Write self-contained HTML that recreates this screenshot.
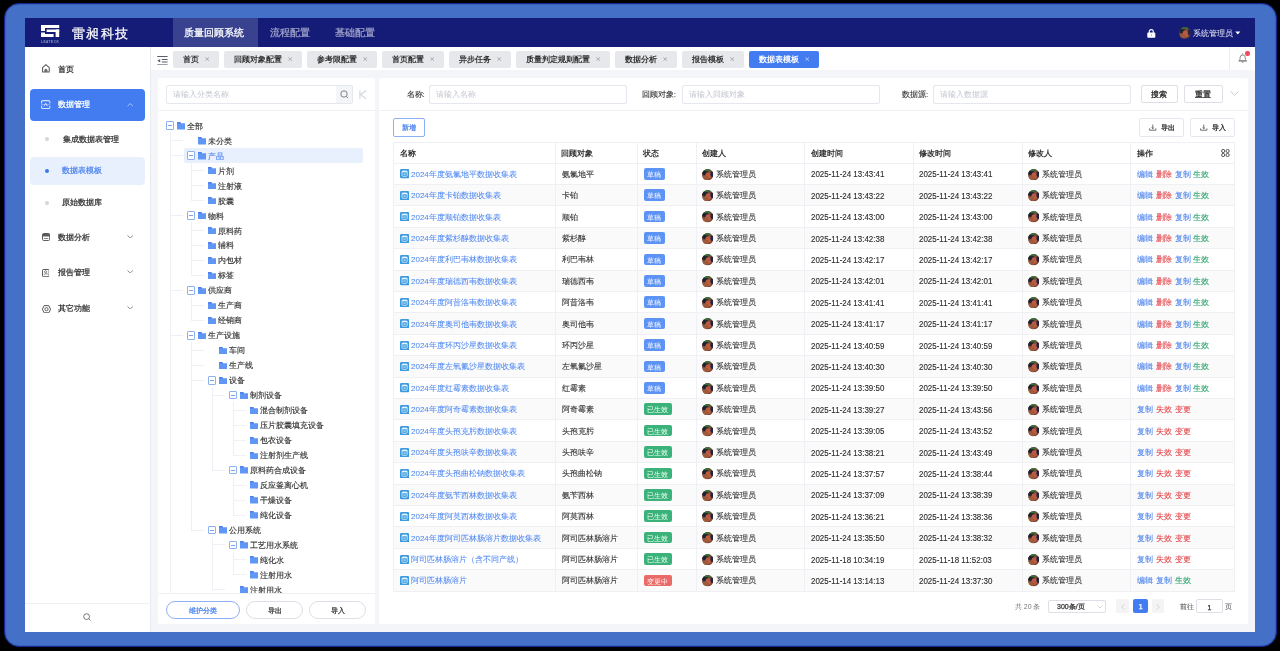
<!DOCTYPE html><html><head><meta charset="utf-8"><style>
*{box-sizing:border-box;margin:0;padding:0}
html,body{width:1280px;height:651px;overflow:hidden;background:#000;font-family:"Liberation Sans", sans-serif;}
.abs{position:absolute}
.t{position:absolute;white-space:nowrap;line-height:1;-webkit-text-stroke-width:0.25px}
.b{-webkit-text-stroke-width:0}
#frame{position:absolute;left:4px;top:3px;width:1272.5px;height:643.5px;border-radius:15px;background:#4570c8;border:1px solid #1a2596;box-shadow:inset 0 0 0 1px #3461b8;}
#app{position:absolute;left:25px;top:18px;width:1230px;height:614px;background:#f4f5f9;overflow:hidden}
</style></head><body>
<div id="root" style="position:absolute;left:0;top:0;width:1280px;height:651px;filter:blur(0.3px)">
<div id="frame"></div>
<div id="app"></div>
<div class="abs" style="left:25px;top:18px;width:1230px;height:29px;background:#151c78"></div>
<svg class="abs" style="left:41px;top:25px;" width="19" height="18" viewBox="0 0 19 18"><g fill="#fff"><rect x="0" y="0" width="18.2" height="3"/><rect x="0" y="0" width="4" height="6"/><rect x="5.6" y="4.5" width="12.6" height="2.5"/><rect x="14.6" y="4.5" width="3.6" height="7.5"/><rect x="0" y="7.5" width="4" height="4.5"/><rect x="0" y="9" width="12.6" height="3"/></g><text x="9.1" y="17.5" font-size="3.2" fill="#9a9fcc" text-anchor="middle" font-family="Liberation Sans" font-weight="bold" letter-spacing="0.5">LEATECK</text></svg>
<div class="t" style="left:71.5px;top:26.70px;font-size:13px;height:13px;line-height:13px;color:#fff;font-weight:400;letter-spacing:1.6px">雷昶科技</div>
<div class="abs" style="left:172.6px;top:18px;width:85.4px;height:29px;background:#38428f"></div>
<div class="t" style="left:184.4px;top:28.05px;font-size:10.3px;height:10.3px;line-height:10.3px;color:#fff;font-weight:500;">质量回顾系统</div>
<div class="t" style="left:270px;top:28.05px;font-size:10.3px;height:10.3px;line-height:10.3px;color:#9fa3c9;font-weight:400;">流程配置</div>
<div class="t" style="left:334.7px;top:28.05px;font-size:10.3px;height:10.3px;line-height:10.3px;color:#9fa3c9;font-weight:400;">基础配置</div>
<svg class="abs" style="left:1147.3px;top:28.6px;" width="8.6" height="9" viewBox="0 0 8.6 9"><path d="M2.3 4.2 V2.6 A2 2 0 0 1 6.3 2.6 V4.2" fill="none" stroke="#fff" stroke-width="1.1"/><rect x="0.3" y="3.6" width="8" height="5.2" rx="0.8" fill="#fff"/><rect x="3.9" y="5.4" width="0.8" height="1.6" fill="#8a8fc0"/></svg>
<svg class="abs" style="left:1179px;top:27.4px;" width="11.8" height="11.8" viewBox="0 0 11.8 11.8"><defs><clipPath id="av12"><circle cx="5.9" cy="5.9" r="5.9"/></clipPath></defs><g clip-path="url(#av12)"><rect width="11.8" height="11.8" fill="#7e4632"/><ellipse cx="2.95" cy="3.54" rx="3.54" ry="2.596" fill="#1c2230"/><ellipse cx="5.3100000000000005" cy="0.9440000000000001" rx="4.13" ry="1.416" fill="#3a6a3a"/><ellipse cx="6.490000000000001" cy="6.844" rx="2.95" ry="3.54" fill="#b95a42"/><ellipse cx="10.384" cy="5.3100000000000005" rx="1.6520000000000004" ry="2.95" fill="#1e2440"/><ellipse cx="3.54" cy="9.440000000000001" rx="2.95" ry="2.3600000000000003" fill="#9a5a3c"/></g></svg>
<div class="t" style="left:1193.4px;top:29.60px;font-size:8px;height:8px;line-height:8px;color:#dfe2f2;font-weight:400;-webkit-text-stroke-width:0.05px">系统管理员</div>
<svg class="abs" style="left:1235px;top:31px;" width="6" height="4" viewBox="0 0 6 4"><path d="M0.3 0.5 L5.3 0.5 L2.8 3.5Z" fill="#fff"/></svg>
<div class="abs" style="left:25px;top:47px;width:126px;height:585px;background:#fff;border-right:1px solid #e9ebf0"></div>
<svg class="abs" style="left:42px;top:64.4px;" width="8" height="8.6" viewBox="0 0 8 8.6"><path d="M0.55 3.6 L3.9 0.6 L7.25 3.6 V8.0 H0.55 Z" fill="none" stroke="#5a5a5a" stroke-width="1.05" stroke-linejoin="round"/><path d="M2.4 8.0 V6.3 A1.5 1.5 0 0 1 5.4 6.3 V8.0Z" fill="#6a6a6a"/></svg>
<div class="t" style="left:57.7px;top:65.60px;font-size:8px;height:8px;line-height:8px;color:#333;font-weight:400;">首页</div>
<div class="abs" style="left:30px;top:89px;width:115px;height:32px;background:#437bf0;border-radius:4px"></div>
<svg class="abs" style="left:41.2px;top:99.9px;" width="9.4" height="9.2" viewBox="0 0 9.4 9.2"><g fill="none" stroke="#d6e4ff" stroke-width="1.1"><path d="M0.6 3.4 V2 Q0.6 0.6 2 0.6 H7.4 Q8.8 0.6 8.8 2 V3.4"/><path d="M0.6 5.8 V7.2 Q0.6 8.6 2 8.6 H7.4 Q8.8 8.6 8.8 7.2 V5.8"/></g><path d="M0 4.6 H9.4" stroke="#b9cffa" stroke-width="0.6"/><path d="M3 6.2 L4.7 3.2 L6.4 6.2" fill="none" stroke="#d6e4ff" stroke-width="0.9"/></svg>
<div class="t" style="left:57.6px;top:101.10px;font-size:8px;height:8px;line-height:8px;color:#fff;font-weight:400;">数据管理</div>
<svg class="abs" style="left:127px;top:103.2px;" width="6.4" height="3.6" viewBox="0 0 6.4 3.6"><path d="M0.5 3.1 L3.2 0.6 L5.9 3.1" fill="none" stroke="#a9c4f8" stroke-width="1"/></svg>
<div class="abs" style="left:45px;top:137px;width:4px;height:4px;background:#d4d6de;border-radius:50%"></div>
<div class="t" style="left:62.6px;top:135.60px;font-size:8px;height:8px;line-height:8px;color:#333;font-weight:400;">集成数据表管理</div>
<div class="abs" style="left:30px;top:157px;width:115px;height:28.4px;background:#e9f0fd;border-radius:4px"></div>
<div class="abs" style="left:44.8px;top:168.7px;width:4px;height:4px;background:#3b78e7;border-radius:50%"></div>
<div class="t" style="left:62px;top:167.30px;font-size:8px;height:8px;line-height:8px;color:#4f86ee;font-weight:400;">数据表模板</div>
<div class="abs" style="left:45px;top:200.5px;width:4px;height:4px;background:#d4d6de;border-radius:50%"></div>
<div class="t" style="left:62px;top:199.10px;font-size:8px;height:8px;line-height:8px;color:#333;font-weight:400;">原始数据库</div>
<svg class="abs" style="left:41.9px;top:232.9px;" width="8.2" height="8" viewBox="0 0 8.2 8"><rect x="0.5" y="0.5" width="7.2" height="7" rx="1.3" fill="none" stroke="#5a5a5a" stroke-width="1"/><rect x="0.5" y="0.5" width="7.2" height="3" rx="1" fill="#5a5a5a"/><rect x="2" y="5.1" width="4.2" height="0.9" fill="#777"/></svg>
<div class="t" style="left:57.9px;top:233.60px;font-size:8px;height:8px;line-height:8px;color:#333;font-weight:400;">数据分析</div>
<svg class="abs" style="left:127.2px;top:234.9px;" width="6.4" height="3.6" viewBox="0 0 6.4 3.6"><path d="M0.5 0.5 L3.2 3 L5.9 0.5" fill="none" stroke="#8a8a8a" stroke-width="1"/></svg>
<svg class="abs" style="left:41.9px;top:268.8px;" width="7.6" height="8.2" viewBox="0 0 7.6 8.2"><rect x="0.5" y="0.5" width="6.6" height="7.2" rx="0.8" fill="none" stroke="#5a5a5a" stroke-width="1"/><circle cx="3.6" cy="2.8" r="1.1" fill="none" stroke="#666" stroke-width="0.8"/><path d="M1.8 5.6 L3.4 4.9 H5.8" fill="none" stroke="#666" stroke-width="0.8"/></svg>
<div class="t" style="left:57.9px;top:268.60px;font-size:8px;height:8px;line-height:8px;color:#333;font-weight:400;">报告管理</div>
<svg class="abs" style="left:127.2px;top:269.9px;" width="6.4" height="3.6" viewBox="0 0 6.4 3.6"><path d="M0.5 0.5 L3.2 3 L5.9 0.5" fill="none" stroke="#8a8a8a" stroke-width="1"/></svg>
<svg class="abs" style="left:41.5px;top:304.5px;" width="9" height="8.4" viewBox="0 0 9 8.4"><path d="M2.2 0.6 H6.8 L8.6 4.2 L6.8 7.8 H2.2 L0.4 4.2Z" fill="none" stroke="#555" stroke-width="1"/><circle cx="4.5" cy="4.2" r="1.6" fill="none" stroke="#555" stroke-width="0.9"/></svg>
<div class="t" style="left:57.9px;top:304.60px;font-size:8px;height:8px;line-height:8px;color:#333;font-weight:400;">其它功能</div>
<svg class="abs" style="left:127.2px;top:305.9px;" width="6.4" height="3.6" viewBox="0 0 6.4 3.6"><path d="M0.5 0.5 L3.2 3 L5.9 0.5" fill="none" stroke="#8a8a8a" stroke-width="1"/></svg>
<div class="abs" style="left:25px;top:603.2px;width:126px;height:1px;background:#f0f1f4"></div>
<svg class="abs" style="left:83px;top:613px;" width="8" height="8" viewBox="0 0 8 8"><circle cx="3.6" cy="3.6" r="2.9" fill="none" stroke="#666" stroke-width="0.9"/><path d="M5.8 5.8 L7.4 7.4" stroke="#666" stroke-width="0.9"/></svg>
<div class="abs" style="left:151px;top:47px;width:1104px;height:23px;background:#fff"></div>
<svg class="abs" style="left:157px;top:55.8px;" width="11" height="9.5" viewBox="0 0 11 9.5"><g fill="#5a5e70"><rect x="0.2" y="0" width="10.4" height="1"/><rect x="4.8" y="3" width="5.8" height="1"/><rect x="4.8" y="5.5" width="5.8" height="1"/><rect x="0.2" y="8.4" width="10.4" height="1"/><path d="M0.3 4.7 L3.2 2.9 V6.5Z"/></g></svg>
<div class="abs" style="left:173.0px;top:50.6px;width:46px;height:17px;background:#e7e8eb;border-radius:2px"></div>
<div class="t b" style="left:182.5px;top:55.60px;font-size:8px;height:8px;line-height:8px;color:#333;font-weight:600;">首页</div>
<svg class="abs" style="left:205.0px;top:56.9px;" width="4.4" height="4.2" viewBox="0 0 4.4 4.2"><path d="M0.4 0.4 L4 3.8 M4 0.4 L0.4 3.8" stroke="#9a9a9a" stroke-width="0.75"/></svg>
<div class="abs" style="left:224.0px;top:50.6px;width:78px;height:17px;background:#e7e8eb;border-radius:2px"></div>
<div class="t b" style="left:233.5px;top:55.60px;font-size:8px;height:8px;line-height:8px;color:#333;font-weight:600;">回顾对象配置</div>
<svg class="abs" style="left:288.0px;top:56.9px;" width="4.4" height="4.2" viewBox="0 0 4.4 4.2"><path d="M0.4 0.4 L4 3.8 M4 0.4 L0.4 3.8" stroke="#9a9a9a" stroke-width="0.75"/></svg>
<div class="abs" style="left:307.0px;top:50.6px;width:70px;height:17px;background:#e7e8eb;border-radius:2px"></div>
<div class="t b" style="left:316.5px;top:55.60px;font-size:8px;height:8px;line-height:8px;color:#333;font-weight:600;">参考限配置</div>
<svg class="abs" style="left:363.0px;top:56.9px;" width="4.4" height="4.2" viewBox="0 0 4.4 4.2"><path d="M0.4 0.4 L4 3.8 M4 0.4 L0.4 3.8" stroke="#9a9a9a" stroke-width="0.75"/></svg>
<div class="abs" style="left:382.0px;top:50.6px;width:62px;height:17px;background:#e7e8eb;border-radius:2px"></div>
<div class="t b" style="left:391.5px;top:55.60px;font-size:8px;height:8px;line-height:8px;color:#333;font-weight:600;">首页配置</div>
<svg class="abs" style="left:430.0px;top:56.9px;" width="4.4" height="4.2" viewBox="0 0 4.4 4.2"><path d="M0.4 0.4 L4 3.8 M4 0.4 L0.4 3.8" stroke="#9a9a9a" stroke-width="0.75"/></svg>
<div class="abs" style="left:449.0px;top:50.6px;width:62px;height:17px;background:#e7e8eb;border-radius:2px"></div>
<div class="t b" style="left:458.5px;top:55.60px;font-size:8px;height:8px;line-height:8px;color:#333;font-weight:600;">异步任务</div>
<svg class="abs" style="left:497.0px;top:56.9px;" width="4.4" height="4.2" viewBox="0 0 4.4 4.2"><path d="M0.4 0.4 L4 3.8 M4 0.4 L0.4 3.8" stroke="#9a9a9a" stroke-width="0.75"/></svg>
<div class="abs" style="left:516.0px;top:50.6px;width:94px;height:17px;background:#e7e8eb;border-radius:2px"></div>
<div class="t b" style="left:525.5px;top:55.60px;font-size:8px;height:8px;line-height:8px;color:#333;font-weight:600;">质量判定规则配置</div>
<svg class="abs" style="left:596.0px;top:56.9px;" width="4.4" height="4.2" viewBox="0 0 4.4 4.2"><path d="M0.4 0.4 L4 3.8 M4 0.4 L0.4 3.8" stroke="#9a9a9a" stroke-width="0.75"/></svg>
<div class="abs" style="left:615.0px;top:50.6px;width:62px;height:17px;background:#e7e8eb;border-radius:2px"></div>
<div class="t b" style="left:624.5px;top:55.60px;font-size:8px;height:8px;line-height:8px;color:#333;font-weight:600;">数据分析</div>
<svg class="abs" style="left:663.0px;top:56.9px;" width="4.4" height="4.2" viewBox="0 0 4.4 4.2"><path d="M0.4 0.4 L4 3.8 M4 0.4 L0.4 3.8" stroke="#9a9a9a" stroke-width="0.75"/></svg>
<div class="abs" style="left:682.0px;top:50.6px;width:62px;height:17px;background:#e7e8eb;border-radius:2px"></div>
<div class="t b" style="left:691.5px;top:55.60px;font-size:8px;height:8px;line-height:8px;color:#333;font-weight:600;">报告模板</div>
<svg class="abs" style="left:730.0px;top:56.9px;" width="4.4" height="4.2" viewBox="0 0 4.4 4.2"><path d="M0.4 0.4 L4 3.8 M4 0.4 L0.4 3.8" stroke="#9a9a9a" stroke-width="0.75"/></svg>
<div class="abs" style="left:749.0px;top:50.6px;width:70px;height:17px;background:#437bf0;border-radius:2px"></div>
<div class="t b" style="left:758.5px;top:55.60px;font-size:8px;height:8px;line-height:8px;color:#fff;font-weight:600;">数据表模板</div>
<svg class="abs" style="left:805.0px;top:56.9px;" width="4.4" height="4.2" viewBox="0 0 4.4 4.2"><path d="M0.4 0.4 L4 3.8 M4 0.4 L0.4 3.8" stroke="#c9d9fa" stroke-width="0.75"/></svg>
<div class="abs" style="left:1229.3px;top:47px;width:1px;height:23px;background:#eceef2"></div>
<svg class="abs" style="left:1238px;top:53px;" width="9.4" height="10" viewBox="0 0 9.4 10"><path d="M1.3 7.8 C2 7 2.1 6 2.1 4.6 A2.6 2.6 0 0 1 7.3 4.6 C7.3 6 7.4 7 8.1 7.8 Z" fill="none" stroke="#666" stroke-width="0.75"/><path d="M0.4 8 H9" stroke="#666" stroke-width="0.75"/><path d="M4.7 0.4 V1.8" stroke="#666" stroke-width="0.7"/><path d="M3.9 9.2 H5.5" stroke="#666" stroke-width="0.8"/></svg>
<div class="abs" style="left:1245.4px;top:51.1px;width:4.5px;height:4.5px;background:#f5475a;border-radius:50%"></div>
<div class="abs" style="left:157.6px;top:78.4px;width:217.8px;height:545.2px;background:#fff;border-radius:2px"></div>
<div class="abs" style="left:166.2px;top:85.3px;width:186.5px;height:18.7px;background:#fff;border:1px solid #e4e7ed;border-radius:2px"></div>
<div class="abs" style="left:335.8px;top:86.3px;width:15.9px;height:16.7px;background:#f3f5f8"></div>
<svg class="abs" style="left:339.5px;top:89.8px;" width="9" height="9" viewBox="0 0 9 9"><circle cx="4" cy="4" r="3.2" fill="none" stroke="#666" stroke-width="0.8"/><path d="M6.3 6.3 L8 8" stroke="#666" stroke-width="0.8"/></svg>
<div class="t" style="left:173px;top:91.00px;font-size:8px;height:8px;line-height:8px;color:#c0c4cc;font-weight:400;-webkit-text-stroke-width:0">请输入分类名称</div>
<svg class="abs" style="left:359px;top:90.2px;" width="8" height="9.2" viewBox="0 0 8 9.2"><path d="M0.9 0.4 V8.8" stroke="#d0d3da" stroke-width="1.1"/><path d="M7.2 0.5 L1.6 4.6 L7.2 8.7" fill="none" stroke="#d0d3da" stroke-width="1.1"/></svg>
<div class="abs" style="left:157.6px;top:110.3px;width:217.8px;height:1px;background:#eff1f6"></div>
<div class="abs" style="left:157.6px;top:111.3px;width:217.8px;height:481.9px;overflow:hidden">
<div class="abs" style="left:26.40px;top:36.60px;width:178.8px;height:15.1px;background:#e9f0fd;border-radius:2px"></div>
<div class="abs" style="left:12.70px;top:28.73px;width:13.0px;height:1px;background:#eef0f6"></div>
<div class="abs" style="left:12.70px;top:43.71px;width:13.0px;height:1px;background:#eef0f6"></div>
<div class="abs" style="left:33.70px;top:58.69px;width:12.5px;height:1px;background:#eef0f6"></div>
<div class="abs" style="left:33.70px;top:73.67px;width:12.5px;height:1px;background:#eef0f6"></div>
<div class="abs" style="left:33.70px;top:88.65px;width:12.5px;height:1px;background:#eef0f6"></div>
<div class="abs" style="left:12.70px;top:103.63px;width:13.0px;height:1px;background:#eef0f6"></div>
<div class="abs" style="left:33.70px;top:118.61px;width:12.5px;height:1px;background:#eef0f6"></div>
<div class="abs" style="left:33.70px;top:133.59px;width:12.5px;height:1px;background:#eef0f6"></div>
<div class="abs" style="left:33.70px;top:148.57px;width:12.5px;height:1px;background:#eef0f6"></div>
<div class="abs" style="left:33.70px;top:163.55px;width:12.5px;height:1px;background:#eef0f6"></div>
<div class="abs" style="left:12.70px;top:178.53px;width:13.0px;height:1px;background:#eef0f6"></div>
<div class="abs" style="left:33.70px;top:193.51px;width:12.5px;height:1px;background:#eef0f6"></div>
<div class="abs" style="left:33.70px;top:208.49px;width:12.5px;height:1px;background:#eef0f6"></div>
<div class="abs" style="left:12.70px;top:223.47px;width:13.0px;height:1px;background:#eef0f6"></div>
<div class="abs" style="left:33.70px;top:238.45px;width:13.0px;height:1px;background:#eef0f6"></div>
<div class="abs" style="left:33.70px;top:253.43px;width:13.0px;height:1px;background:#eef0f6"></div>
<div class="abs" style="left:33.70px;top:268.41px;width:13.0px;height:1px;background:#eef0f6"></div>
<div class="abs" style="left:54.70px;top:283.39px;width:13.0px;height:1px;background:#eef0f6"></div>
<div class="abs" style="left:75.70px;top:298.37px;width:12.5px;height:1px;background:#eef0f6"></div>
<div class="abs" style="left:75.70px;top:313.35px;width:12.5px;height:1px;background:#eef0f6"></div>
<div class="abs" style="left:75.70px;top:328.33px;width:12.5px;height:1px;background:#eef0f6"></div>
<div class="abs" style="left:75.70px;top:343.31px;width:12.5px;height:1px;background:#eef0f6"></div>
<div class="abs" style="left:54.70px;top:358.29px;width:13.0px;height:1px;background:#eef0f6"></div>
<div class="abs" style="left:75.70px;top:373.27px;width:12.5px;height:1px;background:#eef0f6"></div>
<div class="abs" style="left:75.70px;top:388.25px;width:12.5px;height:1px;background:#eef0f6"></div>
<div class="abs" style="left:75.70px;top:403.23px;width:12.5px;height:1px;background:#eef0f6"></div>
<div class="abs" style="left:33.70px;top:418.21px;width:13.0px;height:1px;background:#eef0f6"></div>
<div class="abs" style="left:54.70px;top:433.19px;width:13.0px;height:1px;background:#eef0f6"></div>
<div class="abs" style="left:75.70px;top:448.17px;width:12.5px;height:1px;background:#eef0f6"></div>
<div class="abs" style="left:75.70px;top:463.15px;width:12.5px;height:1px;background:#eef0f6"></div>
<div class="abs" style="left:54.70px;top:478.13px;width:13.0px;height:1px;background:#eef0f6"></div>
<div class="abs" style="left:12.70px;top:20.95px;width:1px;height:567.75px;background:#eef0f6"></div>
<div class="abs" style="left:33.70px;top:50.91px;width:1px;height:38.24000000000001px;background:#eef0f6"></div>
<div class="abs" style="left:33.70px;top:110.83px;width:1px;height:53.22000000000003px;background:#eef0f6"></div>
<div class="abs" style="left:33.70px;top:185.73px;width:1px;height:23.260000000000048px;background:#eef0f6"></div>
<div class="abs" style="left:33.70px;top:230.67px;width:1px;height:188.03999999999996px;background:#eef0f6"></div>
<div class="abs" style="left:54.70px;top:275.61px;width:1px;height:83.18000000000006px;background:#eef0f6"></div>
<div class="abs" style="left:75.70px;top:290.59px;width:1px;height:53.22000000000003px;background:#eef0f6"></div>
<div class="abs" style="left:75.70px;top:365.49px;width:1px;height:38.23999999999995px;background:#eef0f6"></div>
<div class="abs" style="left:54.70px;top:425.41px;width:1px;height:53.219999999999914px;background:#eef0f6"></div>
<div class="abs" style="left:75.70px;top:440.39px;width:1px;height:23.25999999999999px;background:#eef0f6"></div>
<div class="abs" style="left:8.20px;top:9.95px;width:8.5px;height:8.6px;background:#fff;border:1px solid #8cb0f4;border-radius:1px"></div>
<div class="abs" style="left:10.40px;top:13.85px;width:4.2px;height:0.8px;background:#7aa3f2"></div>
<svg class="abs" style="left:19.30px;top:10.65px" width="8.4" height="7.6" viewBox="0 0 8.4 7.6"><path d="M0 0.6 Q0 0 0.6 0 H3.2 L4 1.2 H7.8 Q8.4 1.2 8.4 1.8 V7 Q8.4 7.6 7.8 7.6 H0.6 Q0 7.6 0 7Z" fill="#6096f6"/><path d="M0 0.6 Q0 0 0.6 0 H3.2 L4 1.6 H0Z" fill="#4a7fee"/></svg>
<div class="t" style="left:29.30px;top:11.35px;font-size:8px;height:8px;line-height:8px;color:#333;-webkit-text-stroke-width:0.15px">全部</div>
<svg class="abs" style="left:40.30px;top:25.63px" width="8.4" height="7.6" viewBox="0 0 8.4 7.6"><path d="M0 0.6 Q0 0 0.6 0 H3.2 L4 1.2 H7.8 Q8.4 1.2 8.4 1.8 V7 Q8.4 7.6 7.8 7.6 H0.6 Q0 7.6 0 7Z" fill="#6096f6"/><path d="M0 0.6 Q0 0 0.6 0 H3.2 L4 1.6 H0Z" fill="#4a7fee"/></svg>
<div class="t" style="left:50.30px;top:26.33px;font-size:8px;height:8px;line-height:8px;color:#333;-webkit-text-stroke-width:0.15px">未分类</div>
<div class="abs" style="left:29.20px;top:39.91px;width:8.5px;height:8.6px;background:#fff;border:1px solid #8cb0f4;border-radius:1px"></div>
<div class="abs" style="left:31.40px;top:43.81px;width:4.2px;height:0.8px;background:#7aa3f2"></div>
<svg class="abs" style="left:40.30px;top:40.61px" width="8.4" height="7.6" viewBox="0 0 8.4 7.6"><path d="M0 0.6 Q0 0 0.6 0 H3.2 L4 1.2 H7.8 Q8.4 1.2 8.4 1.8 V7 Q8.4 7.6 7.8 7.6 H0.6 Q0 7.6 0 7Z" fill="#6096f6"/><path d="M0 0.6 Q0 0 0.6 0 H3.2 L4 1.6 H0Z" fill="#4a7fee"/></svg>
<div class="t" style="left:50.30px;top:41.31px;font-size:8px;height:8px;line-height:8px;color:#4f86ee;-webkit-text-stroke-width:0.15px">产品</div>
<svg class="abs" style="left:50.20px;top:55.59px" width="8.4" height="7.6" viewBox="0 0 8.4 7.6"><path d="M0 0.6 Q0 0 0.6 0 H3.2 L4 1.2 H7.8 Q8.4 1.2 8.4 1.8 V7 Q8.4 7.6 7.8 7.6 H0.6 Q0 7.6 0 7Z" fill="#6096f6"/><path d="M0 0.6 Q0 0 0.6 0 H3.2 L4 1.6 H0Z" fill="#4a7fee"/></svg>
<div class="t" style="left:60.20px;top:56.29px;font-size:8px;height:8px;line-height:8px;color:#333;-webkit-text-stroke-width:0.15px">片剂</div>
<svg class="abs" style="left:50.20px;top:70.57px" width="8.4" height="7.6" viewBox="0 0 8.4 7.6"><path d="M0 0.6 Q0 0 0.6 0 H3.2 L4 1.2 H7.8 Q8.4 1.2 8.4 1.8 V7 Q8.4 7.6 7.8 7.6 H0.6 Q0 7.6 0 7Z" fill="#6096f6"/><path d="M0 0.6 Q0 0 0.6 0 H3.2 L4 1.6 H0Z" fill="#4a7fee"/></svg>
<div class="t" style="left:60.20px;top:71.27px;font-size:8px;height:8px;line-height:8px;color:#333;-webkit-text-stroke-width:0.15px">注射液</div>
<svg class="abs" style="left:50.20px;top:85.55px" width="8.4" height="7.6" viewBox="0 0 8.4 7.6"><path d="M0 0.6 Q0 0 0.6 0 H3.2 L4 1.2 H7.8 Q8.4 1.2 8.4 1.8 V7 Q8.4 7.6 7.8 7.6 H0.6 Q0 7.6 0 7Z" fill="#6096f6"/><path d="M0 0.6 Q0 0 0.6 0 H3.2 L4 1.6 H0Z" fill="#4a7fee"/></svg>
<div class="t" style="left:60.20px;top:86.25px;font-size:8px;height:8px;line-height:8px;color:#333;-webkit-text-stroke-width:0.15px">胶囊</div>
<div class="abs" style="left:29.20px;top:99.83px;width:8.5px;height:8.6px;background:#fff;border:1px solid #8cb0f4;border-radius:1px"></div>
<div class="abs" style="left:31.40px;top:103.73px;width:4.2px;height:0.8px;background:#7aa3f2"></div>
<svg class="abs" style="left:40.30px;top:100.53px" width="8.4" height="7.6" viewBox="0 0 8.4 7.6"><path d="M0 0.6 Q0 0 0.6 0 H3.2 L4 1.2 H7.8 Q8.4 1.2 8.4 1.8 V7 Q8.4 7.6 7.8 7.6 H0.6 Q0 7.6 0 7Z" fill="#6096f6"/><path d="M0 0.6 Q0 0 0.6 0 H3.2 L4 1.6 H0Z" fill="#4a7fee"/></svg>
<div class="t" style="left:50.30px;top:101.23px;font-size:8px;height:8px;line-height:8px;color:#333;-webkit-text-stroke-width:0.15px">物料</div>
<svg class="abs" style="left:50.20px;top:115.51px" width="8.4" height="7.6" viewBox="0 0 8.4 7.6"><path d="M0 0.6 Q0 0 0.6 0 H3.2 L4 1.2 H7.8 Q8.4 1.2 8.4 1.8 V7 Q8.4 7.6 7.8 7.6 H0.6 Q0 7.6 0 7Z" fill="#6096f6"/><path d="M0 0.6 Q0 0 0.6 0 H3.2 L4 1.6 H0Z" fill="#4a7fee"/></svg>
<div class="t" style="left:60.20px;top:116.21px;font-size:8px;height:8px;line-height:8px;color:#333;-webkit-text-stroke-width:0.15px">原料药</div>
<svg class="abs" style="left:50.20px;top:130.49px" width="8.4" height="7.6" viewBox="0 0 8.4 7.6"><path d="M0 0.6 Q0 0 0.6 0 H3.2 L4 1.2 H7.8 Q8.4 1.2 8.4 1.8 V7 Q8.4 7.6 7.8 7.6 H0.6 Q0 7.6 0 7Z" fill="#6096f6"/><path d="M0 0.6 Q0 0 0.6 0 H3.2 L4 1.6 H0Z" fill="#4a7fee"/></svg>
<div class="t" style="left:60.20px;top:131.19px;font-size:8px;height:8px;line-height:8px;color:#333;-webkit-text-stroke-width:0.15px">辅料</div>
<svg class="abs" style="left:50.20px;top:145.47px" width="8.4" height="7.6" viewBox="0 0 8.4 7.6"><path d="M0 0.6 Q0 0 0.6 0 H3.2 L4 1.2 H7.8 Q8.4 1.2 8.4 1.8 V7 Q8.4 7.6 7.8 7.6 H0.6 Q0 7.6 0 7Z" fill="#6096f6"/><path d="M0 0.6 Q0 0 0.6 0 H3.2 L4 1.6 H0Z" fill="#4a7fee"/></svg>
<div class="t" style="left:60.20px;top:146.17px;font-size:8px;height:8px;line-height:8px;color:#333;-webkit-text-stroke-width:0.15px">内包材</div>
<svg class="abs" style="left:50.20px;top:160.45px" width="8.4" height="7.6" viewBox="0 0 8.4 7.6"><path d="M0 0.6 Q0 0 0.6 0 H3.2 L4 1.2 H7.8 Q8.4 1.2 8.4 1.8 V7 Q8.4 7.6 7.8 7.6 H0.6 Q0 7.6 0 7Z" fill="#6096f6"/><path d="M0 0.6 Q0 0 0.6 0 H3.2 L4 1.6 H0Z" fill="#4a7fee"/></svg>
<div class="t" style="left:60.20px;top:161.15px;font-size:8px;height:8px;line-height:8px;color:#333;-webkit-text-stroke-width:0.15px">标签</div>
<div class="abs" style="left:29.20px;top:174.73px;width:8.5px;height:8.6px;background:#fff;border:1px solid #8cb0f4;border-radius:1px"></div>
<div class="abs" style="left:31.40px;top:178.63px;width:4.2px;height:0.8px;background:#7aa3f2"></div>
<svg class="abs" style="left:40.30px;top:175.43px" width="8.4" height="7.6" viewBox="0 0 8.4 7.6"><path d="M0 0.6 Q0 0 0.6 0 H3.2 L4 1.2 H7.8 Q8.4 1.2 8.4 1.8 V7 Q8.4 7.6 7.8 7.6 H0.6 Q0 7.6 0 7Z" fill="#6096f6"/><path d="M0 0.6 Q0 0 0.6 0 H3.2 L4 1.6 H0Z" fill="#4a7fee"/></svg>
<div class="t" style="left:50.30px;top:176.13px;font-size:8px;height:8px;line-height:8px;color:#333;-webkit-text-stroke-width:0.15px">供应商</div>
<svg class="abs" style="left:50.20px;top:190.41px" width="8.4" height="7.6" viewBox="0 0 8.4 7.6"><path d="M0 0.6 Q0 0 0.6 0 H3.2 L4 1.2 H7.8 Q8.4 1.2 8.4 1.8 V7 Q8.4 7.6 7.8 7.6 H0.6 Q0 7.6 0 7Z" fill="#6096f6"/><path d="M0 0.6 Q0 0 0.6 0 H3.2 L4 1.6 H0Z" fill="#4a7fee"/></svg>
<div class="t" style="left:60.20px;top:191.11px;font-size:8px;height:8px;line-height:8px;color:#333;-webkit-text-stroke-width:0.15px">生产商</div>
<svg class="abs" style="left:50.20px;top:205.39px" width="8.4" height="7.6" viewBox="0 0 8.4 7.6"><path d="M0 0.6 Q0 0 0.6 0 H3.2 L4 1.2 H7.8 Q8.4 1.2 8.4 1.8 V7 Q8.4 7.6 7.8 7.6 H0.6 Q0 7.6 0 7Z" fill="#6096f6"/><path d="M0 0.6 Q0 0 0.6 0 H3.2 L4 1.6 H0Z" fill="#4a7fee"/></svg>
<div class="t" style="left:60.20px;top:206.09px;font-size:8px;height:8px;line-height:8px;color:#333;-webkit-text-stroke-width:0.15px">经销商</div>
<div class="abs" style="left:29.20px;top:219.67px;width:8.5px;height:8.6px;background:#fff;border:1px solid #8cb0f4;border-radius:1px"></div>
<div class="abs" style="left:31.40px;top:223.57px;width:4.2px;height:0.8px;background:#7aa3f2"></div>
<svg class="abs" style="left:40.30px;top:220.37px" width="8.4" height="7.6" viewBox="0 0 8.4 7.6"><path d="M0 0.6 Q0 0 0.6 0 H3.2 L4 1.2 H7.8 Q8.4 1.2 8.4 1.8 V7 Q8.4 7.6 7.8 7.6 H0.6 Q0 7.6 0 7Z" fill="#6096f6"/><path d="M0 0.6 Q0 0 0.6 0 H3.2 L4 1.6 H0Z" fill="#4a7fee"/></svg>
<div class="t" style="left:50.30px;top:221.07px;font-size:8px;height:8px;line-height:8px;color:#333;-webkit-text-stroke-width:0.15px">生产设施</div>
<svg class="abs" style="left:61.30px;top:235.35px" width="8.4" height="7.6" viewBox="0 0 8.4 7.6"><path d="M0 0.6 Q0 0 0.6 0 H3.2 L4 1.2 H7.8 Q8.4 1.2 8.4 1.8 V7 Q8.4 7.6 7.8 7.6 H0.6 Q0 7.6 0 7Z" fill="#6096f6"/><path d="M0 0.6 Q0 0 0.6 0 H3.2 L4 1.6 H0Z" fill="#4a7fee"/></svg>
<div class="t" style="left:71.30px;top:236.05px;font-size:8px;height:8px;line-height:8px;color:#333;-webkit-text-stroke-width:0.15px">车间</div>
<svg class="abs" style="left:61.30px;top:250.33px" width="8.4" height="7.6" viewBox="0 0 8.4 7.6"><path d="M0 0.6 Q0 0 0.6 0 H3.2 L4 1.2 H7.8 Q8.4 1.2 8.4 1.8 V7 Q8.4 7.6 7.8 7.6 H0.6 Q0 7.6 0 7Z" fill="#6096f6"/><path d="M0 0.6 Q0 0 0.6 0 H3.2 L4 1.6 H0Z" fill="#4a7fee"/></svg>
<div class="t" style="left:71.30px;top:251.03px;font-size:8px;height:8px;line-height:8px;color:#333;-webkit-text-stroke-width:0.15px">生产线</div>
<div class="abs" style="left:50.20px;top:264.61px;width:8.5px;height:8.6px;background:#fff;border:1px solid #8cb0f4;border-radius:1px"></div>
<div class="abs" style="left:52.40px;top:268.51px;width:4.2px;height:0.8px;background:#7aa3f2"></div>
<svg class="abs" style="left:61.30px;top:265.31px" width="8.4" height="7.6" viewBox="0 0 8.4 7.6"><path d="M0 0.6 Q0 0 0.6 0 H3.2 L4 1.2 H7.8 Q8.4 1.2 8.4 1.8 V7 Q8.4 7.6 7.8 7.6 H0.6 Q0 7.6 0 7Z" fill="#6096f6"/><path d="M0 0.6 Q0 0 0.6 0 H3.2 L4 1.6 H0Z" fill="#4a7fee"/></svg>
<div class="t" style="left:71.30px;top:266.01px;font-size:8px;height:8px;line-height:8px;color:#333;-webkit-text-stroke-width:0.15px">设备</div>
<div class="abs" style="left:71.20px;top:279.59px;width:8.5px;height:8.6px;background:#fff;border:1px solid #8cb0f4;border-radius:1px"></div>
<div class="abs" style="left:73.40px;top:283.49px;width:4.2px;height:0.8px;background:#7aa3f2"></div>
<svg class="abs" style="left:82.30px;top:280.29px" width="8.4" height="7.6" viewBox="0 0 8.4 7.6"><path d="M0 0.6 Q0 0 0.6 0 H3.2 L4 1.2 H7.8 Q8.4 1.2 8.4 1.8 V7 Q8.4 7.6 7.8 7.6 H0.6 Q0 7.6 0 7Z" fill="#6096f6"/><path d="M0 0.6 Q0 0 0.6 0 H3.2 L4 1.6 H0Z" fill="#4a7fee"/></svg>
<div class="t" style="left:92.30px;top:280.99px;font-size:8px;height:8px;line-height:8px;color:#333;-webkit-text-stroke-width:0.15px">制剂设备</div>
<svg class="abs" style="left:92.20px;top:295.27px" width="8.4" height="7.6" viewBox="0 0 8.4 7.6"><path d="M0 0.6 Q0 0 0.6 0 H3.2 L4 1.2 H7.8 Q8.4 1.2 8.4 1.8 V7 Q8.4 7.6 7.8 7.6 H0.6 Q0 7.6 0 7Z" fill="#6096f6"/><path d="M0 0.6 Q0 0 0.6 0 H3.2 L4 1.6 H0Z" fill="#4a7fee"/></svg>
<div class="t" style="left:102.20px;top:295.97px;font-size:8px;height:8px;line-height:8px;color:#333;-webkit-text-stroke-width:0.15px">混合制剂设备</div>
<svg class="abs" style="left:92.20px;top:310.25px" width="8.4" height="7.6" viewBox="0 0 8.4 7.6"><path d="M0 0.6 Q0 0 0.6 0 H3.2 L4 1.2 H7.8 Q8.4 1.2 8.4 1.8 V7 Q8.4 7.6 7.8 7.6 H0.6 Q0 7.6 0 7Z" fill="#6096f6"/><path d="M0 0.6 Q0 0 0.6 0 H3.2 L4 1.6 H0Z" fill="#4a7fee"/></svg>
<div class="t" style="left:102.20px;top:310.95px;font-size:8px;height:8px;line-height:8px;color:#333;-webkit-text-stroke-width:0.15px">压片胶囊填充设备</div>
<svg class="abs" style="left:92.20px;top:325.23px" width="8.4" height="7.6" viewBox="0 0 8.4 7.6"><path d="M0 0.6 Q0 0 0.6 0 H3.2 L4 1.2 H7.8 Q8.4 1.2 8.4 1.8 V7 Q8.4 7.6 7.8 7.6 H0.6 Q0 7.6 0 7Z" fill="#6096f6"/><path d="M0 0.6 Q0 0 0.6 0 H3.2 L4 1.6 H0Z" fill="#4a7fee"/></svg>
<div class="t" style="left:102.20px;top:325.93px;font-size:8px;height:8px;line-height:8px;color:#333;-webkit-text-stroke-width:0.15px">包衣设备</div>
<svg class="abs" style="left:92.20px;top:340.21px" width="8.4" height="7.6" viewBox="0 0 8.4 7.6"><path d="M0 0.6 Q0 0 0.6 0 H3.2 L4 1.2 H7.8 Q8.4 1.2 8.4 1.8 V7 Q8.4 7.6 7.8 7.6 H0.6 Q0 7.6 0 7Z" fill="#6096f6"/><path d="M0 0.6 Q0 0 0.6 0 H3.2 L4 1.6 H0Z" fill="#4a7fee"/></svg>
<div class="t" style="left:102.20px;top:340.91px;font-size:8px;height:8px;line-height:8px;color:#333;-webkit-text-stroke-width:0.15px">注射剂生产线</div>
<div class="abs" style="left:71.20px;top:354.49px;width:8.5px;height:8.6px;background:#fff;border:1px solid #8cb0f4;border-radius:1px"></div>
<div class="abs" style="left:73.40px;top:358.39px;width:4.2px;height:0.8px;background:#7aa3f2"></div>
<svg class="abs" style="left:82.30px;top:355.19px" width="8.4" height="7.6" viewBox="0 0 8.4 7.6"><path d="M0 0.6 Q0 0 0.6 0 H3.2 L4 1.2 H7.8 Q8.4 1.2 8.4 1.8 V7 Q8.4 7.6 7.8 7.6 H0.6 Q0 7.6 0 7Z" fill="#6096f6"/><path d="M0 0.6 Q0 0 0.6 0 H3.2 L4 1.6 H0Z" fill="#4a7fee"/></svg>
<div class="t" style="left:92.30px;top:355.89px;font-size:8px;height:8px;line-height:8px;color:#333;-webkit-text-stroke-width:0.15px">原料药合成设备</div>
<svg class="abs" style="left:92.20px;top:370.17px" width="8.4" height="7.6" viewBox="0 0 8.4 7.6"><path d="M0 0.6 Q0 0 0.6 0 H3.2 L4 1.2 H7.8 Q8.4 1.2 8.4 1.8 V7 Q8.4 7.6 7.8 7.6 H0.6 Q0 7.6 0 7Z" fill="#6096f6"/><path d="M0 0.6 Q0 0 0.6 0 H3.2 L4 1.6 H0Z" fill="#4a7fee"/></svg>
<div class="t" style="left:102.20px;top:370.87px;font-size:8px;height:8px;line-height:8px;color:#333;-webkit-text-stroke-width:0.15px">反应釜离心机</div>
<svg class="abs" style="left:92.20px;top:385.15px" width="8.4" height="7.6" viewBox="0 0 8.4 7.6"><path d="M0 0.6 Q0 0 0.6 0 H3.2 L4 1.2 H7.8 Q8.4 1.2 8.4 1.8 V7 Q8.4 7.6 7.8 7.6 H0.6 Q0 7.6 0 7Z" fill="#6096f6"/><path d="M0 0.6 Q0 0 0.6 0 H3.2 L4 1.6 H0Z" fill="#4a7fee"/></svg>
<div class="t" style="left:102.20px;top:385.85px;font-size:8px;height:8px;line-height:8px;color:#333;-webkit-text-stroke-width:0.15px">干燥设备</div>
<svg class="abs" style="left:92.20px;top:400.13px" width="8.4" height="7.6" viewBox="0 0 8.4 7.6"><path d="M0 0.6 Q0 0 0.6 0 H3.2 L4 1.2 H7.8 Q8.4 1.2 8.4 1.8 V7 Q8.4 7.6 7.8 7.6 H0.6 Q0 7.6 0 7Z" fill="#6096f6"/><path d="M0 0.6 Q0 0 0.6 0 H3.2 L4 1.6 H0Z" fill="#4a7fee"/></svg>
<div class="t" style="left:102.20px;top:400.83px;font-size:8px;height:8px;line-height:8px;color:#333;-webkit-text-stroke-width:0.15px">纯化设备</div>
<div class="abs" style="left:50.20px;top:414.41px;width:8.5px;height:8.6px;background:#fff;border:1px solid #8cb0f4;border-radius:1px"></div>
<div class="abs" style="left:52.40px;top:418.31px;width:4.2px;height:0.8px;background:#7aa3f2"></div>
<svg class="abs" style="left:61.30px;top:415.11px" width="8.4" height="7.6" viewBox="0 0 8.4 7.6"><path d="M0 0.6 Q0 0 0.6 0 H3.2 L4 1.2 H7.8 Q8.4 1.2 8.4 1.8 V7 Q8.4 7.6 7.8 7.6 H0.6 Q0 7.6 0 7Z" fill="#6096f6"/><path d="M0 0.6 Q0 0 0.6 0 H3.2 L4 1.6 H0Z" fill="#4a7fee"/></svg>
<div class="t" style="left:71.30px;top:415.81px;font-size:8px;height:8px;line-height:8px;color:#333;-webkit-text-stroke-width:0.15px">公用系统</div>
<div class="abs" style="left:71.20px;top:429.39px;width:8.5px;height:8.6px;background:#fff;border:1px solid #8cb0f4;border-radius:1px"></div>
<div class="abs" style="left:73.40px;top:433.29px;width:4.2px;height:0.8px;background:#7aa3f2"></div>
<svg class="abs" style="left:82.30px;top:430.09px" width="8.4" height="7.6" viewBox="0 0 8.4 7.6"><path d="M0 0.6 Q0 0 0.6 0 H3.2 L4 1.2 H7.8 Q8.4 1.2 8.4 1.8 V7 Q8.4 7.6 7.8 7.6 H0.6 Q0 7.6 0 7Z" fill="#6096f6"/><path d="M0 0.6 Q0 0 0.6 0 H3.2 L4 1.6 H0Z" fill="#4a7fee"/></svg>
<div class="t" style="left:92.30px;top:430.79px;font-size:8px;height:8px;line-height:8px;color:#333;-webkit-text-stroke-width:0.15px">工艺用水系统</div>
<svg class="abs" style="left:92.20px;top:445.07px" width="8.4" height="7.6" viewBox="0 0 8.4 7.6"><path d="M0 0.6 Q0 0 0.6 0 H3.2 L4 1.2 H7.8 Q8.4 1.2 8.4 1.8 V7 Q8.4 7.6 7.8 7.6 H0.6 Q0 7.6 0 7Z" fill="#6096f6"/><path d="M0 0.6 Q0 0 0.6 0 H3.2 L4 1.6 H0Z" fill="#4a7fee"/></svg>
<div class="t" style="left:102.20px;top:445.77px;font-size:8px;height:8px;line-height:8px;color:#333;-webkit-text-stroke-width:0.15px">纯化水</div>
<svg class="abs" style="left:92.20px;top:460.05px" width="8.4" height="7.6" viewBox="0 0 8.4 7.6"><path d="M0 0.6 Q0 0 0.6 0 H3.2 L4 1.2 H7.8 Q8.4 1.2 8.4 1.8 V7 Q8.4 7.6 7.8 7.6 H0.6 Q0 7.6 0 7Z" fill="#6096f6"/><path d="M0 0.6 Q0 0 0.6 0 H3.2 L4 1.6 H0Z" fill="#4a7fee"/></svg>
<div class="t" style="left:102.20px;top:460.75px;font-size:8px;height:8px;line-height:8px;color:#333;-webkit-text-stroke-width:0.15px">注射用水</div>
<svg class="abs" style="left:82.30px;top:475.03px" width="8.4" height="7.6" viewBox="0 0 8.4 7.6"><path d="M0 0.6 Q0 0 0.6 0 H3.2 L4 1.2 H7.8 Q8.4 1.2 8.4 1.8 V7 Q8.4 7.6 7.8 7.6 H0.6 Q0 7.6 0 7Z" fill="#6096f6"/><path d="M0 0.6 Q0 0 0.6 0 H3.2 L4 1.6 H0Z" fill="#4a7fee"/></svg>
<div class="t" style="left:92.30px;top:475.73px;font-size:8px;height:8px;line-height:8px;color:#333;-webkit-text-stroke-width:0.15px">注射用水</div>
</div>
<div class="abs" style="left:157.6px;top:593.2px;width:217.8px;height:1px;background:#eef0f4"></div>
<div class="abs" style="left:166px;top:600.6px;width:74px;height:18.6px;background:#fff;border:1px solid #8fb1f3;border-radius:9.3px"></div>
<div class="t" style="left:166px;width:74.00px;text-align:center;top:607.10px;font-size:7px;height:7px;line-height:7px;color:#4f86ee;font-weight:400;">维护分类</div>
<div class="abs" style="left:246.2px;top:600.6px;width:57.2px;height:18.6px;background:#fff;border:1px solid #dcdfe6;border-radius:9.3px"></div>
<div class="t" style="left:246.2px;width:57.20px;text-align:center;top:607.10px;font-size:7px;height:7px;line-height:7px;color:#333;font-weight:400;">导出</div>
<div class="abs" style="left:309.2px;top:600.6px;width:57.2px;height:18.6px;background:#fff;border:1px solid #dcdfe6;border-radius:9.3px"></div>
<div class="t" style="left:309.2px;width:57.20px;text-align:center;top:607.10px;font-size:7px;height:7px;line-height:7px;color:#333;font-weight:400;">导入</div>
<div class="abs" style="left:379px;top:78.4px;width:869px;height:545.4px;background:#fff;border-radius:2px"></div>
<div class="t" style="left:406.6px;top:90.70px;font-size:8px;height:8px;line-height:8px;color:#333;font-weight:400;-webkit-text-stroke-width:0.1px">名称:</div>
<div class="abs" style="left:429px;top:85.2px;width:198.4px;height:18.5px;background:#fff;border:1px solid #e4e7ed;border-radius:2px"></div>
<div class="t" style="left:436px;top:91.00px;font-size:8px;height:8px;line-height:8px;color:#c0c4cc;font-weight:400;-webkit-text-stroke-width:0">请输入名称</div>
<div class="t" style="left:641.8px;top:90.70px;font-size:8px;height:8px;line-height:8px;color:#333;font-weight:400;-webkit-text-stroke-width:0.1px">回顾对象:</div>
<div class="abs" style="left:681.6px;top:85.2px;width:198px;height:18.5px;background:#fff;border:1px solid #e4e7ed;border-radius:2px"></div>
<div class="t" style="left:688.5px;top:91.00px;font-size:8px;height:8px;line-height:8px;color:#c0c4cc;font-weight:400;-webkit-text-stroke-width:0">请输入回顾对象</div>
<div class="t" style="left:902px;top:90.70px;font-size:8px;height:8px;line-height:8px;color:#333;font-weight:400;-webkit-text-stroke-width:0.1px">数据源:</div>
<div class="abs" style="left:933px;top:85.2px;width:198.4px;height:18.5px;background:#fff;border:1px solid #e4e7ed;border-radius:2px"></div>
<div class="t" style="left:940px;top:91.00px;font-size:8px;height:8px;line-height:8px;color:#c0c4cc;font-weight:400;-webkit-text-stroke-width:0">请输入数据源</div>
<div class="abs" style="left:1140.6px;top:85.4px;width:37.4px;height:18px;background:#fff;border:1px solid #dcdfe6;border-radius:2px"></div>
<div class="t" style="left:1140.6px;width:37.40px;text-align:center;top:91.00px;font-size:8px;height:8px;line-height:8px;color:#222;font-weight:400;">搜索</div>
<div class="abs" style="left:1184.2px;top:85.4px;width:38.4px;height:18px;background:#fff;border:1px solid #dcdfe6;border-radius:2px"></div>
<div class="t" style="left:1184.2px;width:38.40px;text-align:center;top:91.00px;font-size:8px;height:8px;line-height:8px;color:#222;font-weight:400;">重置</div>
<svg class="abs" style="left:1230px;top:91.3px;" width="9" height="5" viewBox="0 0 9 5"><path d="M0.5 0.5 L4.5 4.2 L8.5 0.5" fill="none" stroke="#b8bcc6" stroke-width="0.8"/></svg>
<div class="abs" style="left:379px;top:110.3px;width:869px;height:1px;background:#eff1f6"></div>
<div class="abs" style="left:393.3px;top:118.2px;width:31.7px;height:18.6px;background:#fff;border:1px solid #8cb0f5;border-radius:2px"></div>
<div class="t" style="left:393.3px;width:31.70px;text-align:center;top:124.00px;font-size:7px;height:7px;line-height:7px;color:#4f86ee;font-weight:400;">新增</div>
<div class="abs" style="left:1139.3px;top:118px;width:44.700000000000045px;height:19px;background:#fff;border:1px solid #e4e7ed;border-radius:2px"></div>
<svg class="abs" style="left:1149.3px;top:123.6px;" width="7.5" height="7" viewBox="0 0 7.5 7"><path d="M3.75 0.6 V4.6 M2.6 3.6 L3.75 4.7 L4.9 3.6 M0.6 4.4 V6.2 H6.9 V4.4" fill="none" stroke="#555" stroke-width="0.85"/></svg>
<div class="t" style="left:1161.1px;top:124.40px;font-size:7px;height:7px;line-height:7px;color:#222;font-weight:400;">导出</div>
<div class="abs" style="left:1190.3px;top:118px;width:44.700000000000045px;height:19px;background:#fff;border:1px solid #e4e7ed;border-radius:2px"></div>
<svg class="abs" style="left:1200.3px;top:123.6px;" width="7.5" height="7" viewBox="0 0 7.5 7"><path d="M3.75 0.6 V4.6 M2.6 3.6 L3.75 4.7 L4.9 3.6 M0.6 4.4 V6.2 H6.9 V4.4" fill="none" stroke="#555" stroke-width="0.85"/></svg>
<div class="t" style="left:1212.1px;top:124.40px;font-size:7px;height:7px;line-height:7px;color:#222;font-weight:400;">导入</div>
<div class="abs" style="left:393.3px;top:142.4px;width:841.7px;height:449.20000000000005px;background:#fff;border:1px solid #eef0f4"></div>
<div class="t b" style="left:399.7px;top:149.90px;font-size:8px;height:8px;line-height:8px;color:#333;font-weight:600;">名称</div>
<div class="t b" style="left:561.4px;top:149.90px;font-size:8px;height:8px;line-height:8px;color:#333;font-weight:600;">回顾对象</div>
<div class="t b" style="left:643.4px;top:149.90px;font-size:8px;height:8px;line-height:8px;color:#333;font-weight:600;">状态</div>
<div class="t b" style="left:702.1999999999999px;top:149.90px;font-size:8px;height:8px;line-height:8px;color:#333;font-weight:600;">创建人</div>
<div class="t b" style="left:810.6px;top:149.90px;font-size:8px;height:8px;line-height:8px;color:#333;font-weight:600;">创建时间</div>
<div class="t b" style="left:919.4px;top:149.90px;font-size:8px;height:8px;line-height:8px;color:#333;font-weight:600;">修改时间</div>
<div class="t b" style="left:1028.4px;top:149.90px;font-size:8px;height:8px;line-height:8px;color:#333;font-weight:600;">修改人</div>
<div class="t b" style="left:1136.6000000000001px;top:149.90px;font-size:8px;height:8px;line-height:8px;color:#333;font-weight:600;">操作</div>
<svg class="abs" style="left:1220.8px;top:148.8px;" width="9" height="8" viewBox="0 0 9 8"><g fill="none" stroke="#444" stroke-width="0.9"><circle cx="2.2" cy="2" r="1.6"/><circle cx="6.6" cy="2" r="1.6"/><circle cx="2.2" cy="6" r="1.6"/><circle cx="6.6" cy="6" r="1.6"/></g></svg>
<div class="abs" style="left:394.3px;top:162.6px;width:839.7px;height:1px;background:#eef0f4"></div>
<svg class="abs" style="left:399.7px;top:169.39999999999998px;" width="9.2" height="9.3" viewBox="0 0 9.2 9.3"><rect x="0" y="0" width="9.2" height="9.3" rx="1.4" fill="#3a9ae0"/><rect x="2" y="2" width="5.2" height="5.3" rx="0.9" fill="none" stroke="#cfe6f8" stroke-width="0.9"/><rect x="2" y="2" width="5.2" height="1.3" fill="#e6f2fc"/><rect x="3.4" y="4.3" width="2.4" height="1.6" fill="#9dcdf0"/></svg>
<div class="t" style="left:411px;top:170.70px;font-size:8px;height:8px;line-height:8px;color:#5089f2;font-weight:400;-webkit-text-stroke-width:0.05px">2024年度氨氯地平数据收集表</div>
<div class="t" style="left:562.2px;top:170.70px;font-size:8px;height:8px;line-height:8px;color:#333;font-weight:400;-webkit-text-stroke-width:0.1px">氨氯地平</div>
<div class="abs" style="left:643.6px;top:167.99999999999997px;width:21px;height:11.6px;background:#5d93f5;border-radius:2px"></div>
<div class="t" style="left:643.6px;width:21.00px;text-align:center;top:170.90px;font-size:7px;height:7px;line-height:7px;color:#f4f8ff;font-weight:400;-webkit-text-stroke-width:0">草稿</div>
<svg class="abs" style="left:701.8px;top:168.6px;" width="11.4" height="11.4" viewBox="0 0 11.4 11.4"><defs><clipPath id="av254"><circle cx="5.7" cy="5.7" r="5.7"/></clipPath></defs><g clip-path="url(#av254)"><rect width="11.4" height="11.4" fill="#7e4632"/><ellipse cx="2.85" cy="3.42" rx="3.42" ry="2.508" fill="#1c2230"/><ellipse cx="5.13" cy="0.912" rx="3.9899999999999998" ry="1.3679999999999999" fill="#3a6a3a"/><ellipse cx="6.2700000000000005" cy="6.612" rx="2.85" ry="3.42" fill="#b95a42"/><ellipse cx="10.032" cy="5.13" rx="1.5960000000000003" ry="2.85" fill="#1e2440"/><ellipse cx="3.42" cy="9.120000000000001" rx="2.85" ry="2.2800000000000002" fill="#9a5a3c"/></g></svg>
<div class="t" style="left:715.9px;top:170.70px;font-size:8px;height:8px;line-height:8px;color:#333;font-weight:400;-webkit-text-stroke-width:0.1px">系统管理员</div>
<div class="t" style="left:811.3px;top:170.30px;font-size:8.8px;height:8.8px;line-height:8.8px;color:#2a2a2a;font-weight:400;-webkit-text-stroke-width:0.12px;transform:scaleX(0.905);transform-origin:0 50%">2025-11-24 13:43:41</div>
<div class="t" style="left:919.3px;top:170.30px;font-size:8.8px;height:8.8px;line-height:8.8px;color:#2a2a2a;font-weight:400;-webkit-text-stroke-width:0.12px;transform:scaleX(0.905);transform-origin:0 50%">2025-11-24 13:43:41</div>
<svg class="abs" style="left:1027.5px;top:168.6px;" width="11.4" height="11.4" viewBox="0 0 11.4 11.4"><defs><clipPath id="av258"><circle cx="5.7" cy="5.7" r="5.7"/></clipPath></defs><g clip-path="url(#av258)"><rect width="11.4" height="11.4" fill="#7e4632"/><ellipse cx="2.85" cy="3.42" rx="3.42" ry="2.508" fill="#1c2230"/><ellipse cx="5.13" cy="0.912" rx="3.9899999999999998" ry="1.3679999999999999" fill="#3a6a3a"/><ellipse cx="6.2700000000000005" cy="6.612" rx="2.85" ry="3.42" fill="#b95a42"/><ellipse cx="10.032" cy="5.13" rx="1.5960000000000003" ry="2.85" fill="#1e2440"/><ellipse cx="3.42" cy="9.120000000000001" rx="2.85" ry="2.2800000000000002" fill="#9a5a3c"/></g></svg>
<div class="t" style="left:1041.5px;top:170.70px;font-size:8px;height:8px;line-height:8px;color:#333;font-weight:400;-webkit-text-stroke-width:0.1px">系统管理员</div>
<div class="t" style="left:1137.3px;top:170.70px;font-size:8px;height:8px;line-height:8px;color:#4f86ee;font-weight:400;-webkit-text-stroke-width:0.1px">编辑</div>
<div class="t" style="left:1155.8999999999999px;top:170.70px;font-size:8px;height:8px;line-height:8px;color:#e5484d;font-weight:400;-webkit-text-stroke-width:0.1px">删除</div>
<div class="t" style="left:1174.4999999999998px;top:170.70px;font-size:8px;height:8px;line-height:8px;color:#4f86ee;font-weight:400;-webkit-text-stroke-width:0.1px">复制</div>
<div class="t" style="left:1193.0999999999997px;top:170.70px;font-size:8px;height:8px;line-height:8px;color:#26a269;font-weight:400;-webkit-text-stroke-width:0.1px">生效</div>
<div class="abs" style="left:394.3px;top:185.0px;width:839.7px;height:20.4px;background:#fafafa"></div>
<div class="abs" style="left:394.3px;top:184.0px;width:839.7px;height:1px;background:#eef0f4"></div>
<svg class="abs" style="left:399.7px;top:190.79999999999998px;" width="9.2" height="9.3" viewBox="0 0 9.2 9.3"><rect x="0" y="0" width="9.2" height="9.3" rx="1.4" fill="#3a9ae0"/><rect x="2" y="2" width="5.2" height="5.3" rx="0.9" fill="none" stroke="#cfe6f8" stroke-width="0.9"/><rect x="2" y="2" width="5.2" height="1.3" fill="#e6f2fc"/><rect x="3.4" y="4.3" width="2.4" height="1.6" fill="#9dcdf0"/></svg>
<div class="t" style="left:411px;top:192.10px;font-size:8px;height:8px;line-height:8px;color:#5089f2;font-weight:400;-webkit-text-stroke-width:0.05px">2024年度卡铂数据收集表</div>
<div class="t" style="left:562.2px;top:192.10px;font-size:8px;height:8px;line-height:8px;color:#333;font-weight:400;-webkit-text-stroke-width:0.1px">卡铂</div>
<div class="abs" style="left:643.6px;top:189.39999999999998px;width:21px;height:11.6px;background:#5d93f5;border-radius:2px"></div>
<div class="t" style="left:643.6px;width:21.00px;text-align:center;top:192.30px;font-size:7px;height:7px;line-height:7px;color:#f4f8ff;font-weight:400;-webkit-text-stroke-width:0">草稿</div>
<svg class="abs" style="left:701.8px;top:190.0px;" width="11.4" height="11.4" viewBox="0 0 11.4 11.4"><defs><clipPath id="av271"><circle cx="5.7" cy="5.7" r="5.7"/></clipPath></defs><g clip-path="url(#av271)"><rect width="11.4" height="11.4" fill="#7e4632"/><ellipse cx="2.85" cy="3.42" rx="3.42" ry="2.508" fill="#1c2230"/><ellipse cx="5.13" cy="0.912" rx="3.9899999999999998" ry="1.3679999999999999" fill="#3a6a3a"/><ellipse cx="6.2700000000000005" cy="6.612" rx="2.85" ry="3.42" fill="#b95a42"/><ellipse cx="10.032" cy="5.13" rx="1.5960000000000003" ry="2.85" fill="#1e2440"/><ellipse cx="3.42" cy="9.120000000000001" rx="2.85" ry="2.2800000000000002" fill="#9a5a3c"/></g></svg>
<div class="t" style="left:715.9px;top:192.10px;font-size:8px;height:8px;line-height:8px;color:#333;font-weight:400;-webkit-text-stroke-width:0.1px">系统管理员</div>
<div class="t" style="left:811.3px;top:191.70px;font-size:8.8px;height:8.8px;line-height:8.8px;color:#2a2a2a;font-weight:400;-webkit-text-stroke-width:0.12px;transform:scaleX(0.905);transform-origin:0 50%">2025-11-24 13:43:22</div>
<div class="t" style="left:919.3px;top:191.70px;font-size:8.8px;height:8.8px;line-height:8.8px;color:#2a2a2a;font-weight:400;-webkit-text-stroke-width:0.12px;transform:scaleX(0.905);transform-origin:0 50%">2025-11-24 13:43:22</div>
<svg class="abs" style="left:1027.5px;top:190.0px;" width="11.4" height="11.4" viewBox="0 0 11.4 11.4"><defs><clipPath id="av275"><circle cx="5.7" cy="5.7" r="5.7"/></clipPath></defs><g clip-path="url(#av275)"><rect width="11.4" height="11.4" fill="#7e4632"/><ellipse cx="2.85" cy="3.42" rx="3.42" ry="2.508" fill="#1c2230"/><ellipse cx="5.13" cy="0.912" rx="3.9899999999999998" ry="1.3679999999999999" fill="#3a6a3a"/><ellipse cx="6.2700000000000005" cy="6.612" rx="2.85" ry="3.42" fill="#b95a42"/><ellipse cx="10.032" cy="5.13" rx="1.5960000000000003" ry="2.85" fill="#1e2440"/><ellipse cx="3.42" cy="9.120000000000001" rx="2.85" ry="2.2800000000000002" fill="#9a5a3c"/></g></svg>
<div class="t" style="left:1041.5px;top:192.10px;font-size:8px;height:8px;line-height:8px;color:#333;font-weight:400;-webkit-text-stroke-width:0.1px">系统管理员</div>
<div class="t" style="left:1137.3px;top:192.10px;font-size:8px;height:8px;line-height:8px;color:#4f86ee;font-weight:400;-webkit-text-stroke-width:0.1px">编辑</div>
<div class="t" style="left:1155.8999999999999px;top:192.10px;font-size:8px;height:8px;line-height:8px;color:#e5484d;font-weight:400;-webkit-text-stroke-width:0.1px">删除</div>
<div class="t" style="left:1174.4999999999998px;top:192.10px;font-size:8px;height:8px;line-height:8px;color:#4f86ee;font-weight:400;-webkit-text-stroke-width:0.1px">复制</div>
<div class="t" style="left:1193.0999999999997px;top:192.10px;font-size:8px;height:8px;line-height:8px;color:#26a269;font-weight:400;-webkit-text-stroke-width:0.1px">生效</div>
<div class="abs" style="left:394.3px;top:205.39999999999998px;width:839.7px;height:1px;background:#eef0f4"></div>
<svg class="abs" style="left:399.7px;top:212.19999999999996px;" width="9.2" height="9.3" viewBox="0 0 9.2 9.3"><rect x="0" y="0" width="9.2" height="9.3" rx="1.4" fill="#3a9ae0"/><rect x="2" y="2" width="5.2" height="5.3" rx="0.9" fill="none" stroke="#cfe6f8" stroke-width="0.9"/><rect x="2" y="2" width="5.2" height="1.3" fill="#e6f2fc"/><rect x="3.4" y="4.3" width="2.4" height="1.6" fill="#9dcdf0"/></svg>
<div class="t" style="left:411px;top:213.50px;font-size:8px;height:8px;line-height:8px;color:#5089f2;font-weight:400;-webkit-text-stroke-width:0.05px">2024年度顺铂数据收集表</div>
<div class="t" style="left:562.2px;top:213.50px;font-size:8px;height:8px;line-height:8px;color:#333;font-weight:400;-webkit-text-stroke-width:0.1px">顺铂</div>
<div class="abs" style="left:643.6px;top:210.79999999999995px;width:21px;height:11.6px;background:#5d93f5;border-radius:2px"></div>
<div class="t" style="left:643.6px;width:21.00px;text-align:center;top:213.70px;font-size:7px;height:7px;line-height:7px;color:#f4f8ff;font-weight:400;-webkit-text-stroke-width:0">草稿</div>
<svg class="abs" style="left:701.8px;top:211.39999999999998px;" width="11.4" height="11.4" viewBox="0 0 11.4 11.4"><defs><clipPath id="av287"><circle cx="5.7" cy="5.7" r="5.7"/></clipPath></defs><g clip-path="url(#av287)"><rect width="11.4" height="11.4" fill="#7e4632"/><ellipse cx="2.85" cy="3.42" rx="3.42" ry="2.508" fill="#1c2230"/><ellipse cx="5.13" cy="0.912" rx="3.9899999999999998" ry="1.3679999999999999" fill="#3a6a3a"/><ellipse cx="6.2700000000000005" cy="6.612" rx="2.85" ry="3.42" fill="#b95a42"/><ellipse cx="10.032" cy="5.13" rx="1.5960000000000003" ry="2.85" fill="#1e2440"/><ellipse cx="3.42" cy="9.120000000000001" rx="2.85" ry="2.2800000000000002" fill="#9a5a3c"/></g></svg>
<div class="t" style="left:715.9px;top:213.50px;font-size:8px;height:8px;line-height:8px;color:#333;font-weight:400;-webkit-text-stroke-width:0.1px">系统管理员</div>
<div class="t" style="left:811.3px;top:213.10px;font-size:8.8px;height:8.8px;line-height:8.8px;color:#2a2a2a;font-weight:400;-webkit-text-stroke-width:0.12px;transform:scaleX(0.905);transform-origin:0 50%">2025-11-24 13:43:00</div>
<div class="t" style="left:919.3px;top:213.10px;font-size:8.8px;height:8.8px;line-height:8.8px;color:#2a2a2a;font-weight:400;-webkit-text-stroke-width:0.12px;transform:scaleX(0.905);transform-origin:0 50%">2025-11-24 13:43:00</div>
<svg class="abs" style="left:1027.5px;top:211.39999999999998px;" width="11.4" height="11.4" viewBox="0 0 11.4 11.4"><defs><clipPath id="av291"><circle cx="5.7" cy="5.7" r="5.7"/></clipPath></defs><g clip-path="url(#av291)"><rect width="11.4" height="11.4" fill="#7e4632"/><ellipse cx="2.85" cy="3.42" rx="3.42" ry="2.508" fill="#1c2230"/><ellipse cx="5.13" cy="0.912" rx="3.9899999999999998" ry="1.3679999999999999" fill="#3a6a3a"/><ellipse cx="6.2700000000000005" cy="6.612" rx="2.85" ry="3.42" fill="#b95a42"/><ellipse cx="10.032" cy="5.13" rx="1.5960000000000003" ry="2.85" fill="#1e2440"/><ellipse cx="3.42" cy="9.120000000000001" rx="2.85" ry="2.2800000000000002" fill="#9a5a3c"/></g></svg>
<div class="t" style="left:1041.5px;top:213.50px;font-size:8px;height:8px;line-height:8px;color:#333;font-weight:400;-webkit-text-stroke-width:0.1px">系统管理员</div>
<div class="t" style="left:1137.3px;top:213.50px;font-size:8px;height:8px;line-height:8px;color:#4f86ee;font-weight:400;-webkit-text-stroke-width:0.1px">编辑</div>
<div class="t" style="left:1155.8999999999999px;top:213.50px;font-size:8px;height:8px;line-height:8px;color:#e5484d;font-weight:400;-webkit-text-stroke-width:0.1px">删除</div>
<div class="t" style="left:1174.4999999999998px;top:213.50px;font-size:8px;height:8px;line-height:8px;color:#4f86ee;font-weight:400;-webkit-text-stroke-width:0.1px">复制</div>
<div class="t" style="left:1193.0999999999997px;top:213.50px;font-size:8px;height:8px;line-height:8px;color:#26a269;font-weight:400;-webkit-text-stroke-width:0.1px">生效</div>
<div class="abs" style="left:394.3px;top:227.79999999999998px;width:839.7px;height:20.4px;background:#fafafa"></div>
<div class="abs" style="left:394.3px;top:226.79999999999998px;width:839.7px;height:1px;background:#eef0f4"></div>
<svg class="abs" style="left:399.7px;top:233.59999999999997px;" width="9.2" height="9.3" viewBox="0 0 9.2 9.3"><rect x="0" y="0" width="9.2" height="9.3" rx="1.4" fill="#3a9ae0"/><rect x="2" y="2" width="5.2" height="5.3" rx="0.9" fill="none" stroke="#cfe6f8" stroke-width="0.9"/><rect x="2" y="2" width="5.2" height="1.3" fill="#e6f2fc"/><rect x="3.4" y="4.3" width="2.4" height="1.6" fill="#9dcdf0"/></svg>
<div class="t" style="left:411px;top:234.90px;font-size:8px;height:8px;line-height:8px;color:#5089f2;font-weight:400;-webkit-text-stroke-width:0.05px">2024年度紫杉醇数据收集表</div>
<div class="t" style="left:562.2px;top:234.90px;font-size:8px;height:8px;line-height:8px;color:#333;font-weight:400;-webkit-text-stroke-width:0.1px">紫杉醇</div>
<div class="abs" style="left:643.6px;top:232.19999999999996px;width:21px;height:11.6px;background:#5d93f5;border-radius:2px"></div>
<div class="t" style="left:643.6px;width:21.00px;text-align:center;top:235.10px;font-size:7px;height:7px;line-height:7px;color:#f4f8ff;font-weight:400;-webkit-text-stroke-width:0">草稿</div>
<svg class="abs" style="left:701.8px;top:232.79999999999998px;" width="11.4" height="11.4" viewBox="0 0 11.4 11.4"><defs><clipPath id="av304"><circle cx="5.7" cy="5.7" r="5.7"/></clipPath></defs><g clip-path="url(#av304)"><rect width="11.4" height="11.4" fill="#7e4632"/><ellipse cx="2.85" cy="3.42" rx="3.42" ry="2.508" fill="#1c2230"/><ellipse cx="5.13" cy="0.912" rx="3.9899999999999998" ry="1.3679999999999999" fill="#3a6a3a"/><ellipse cx="6.2700000000000005" cy="6.612" rx="2.85" ry="3.42" fill="#b95a42"/><ellipse cx="10.032" cy="5.13" rx="1.5960000000000003" ry="2.85" fill="#1e2440"/><ellipse cx="3.42" cy="9.120000000000001" rx="2.85" ry="2.2800000000000002" fill="#9a5a3c"/></g></svg>
<div class="t" style="left:715.9px;top:234.90px;font-size:8px;height:8px;line-height:8px;color:#333;font-weight:400;-webkit-text-stroke-width:0.1px">系统管理员</div>
<div class="t" style="left:811.3px;top:234.50px;font-size:8.8px;height:8.8px;line-height:8.8px;color:#2a2a2a;font-weight:400;-webkit-text-stroke-width:0.12px;transform:scaleX(0.905);transform-origin:0 50%">2025-11-24 13:42:38</div>
<div class="t" style="left:919.3px;top:234.50px;font-size:8.8px;height:8.8px;line-height:8.8px;color:#2a2a2a;font-weight:400;-webkit-text-stroke-width:0.12px;transform:scaleX(0.905);transform-origin:0 50%">2025-11-24 13:42:38</div>
<svg class="abs" style="left:1027.5px;top:232.79999999999998px;" width="11.4" height="11.4" viewBox="0 0 11.4 11.4"><defs><clipPath id="av308"><circle cx="5.7" cy="5.7" r="5.7"/></clipPath></defs><g clip-path="url(#av308)"><rect width="11.4" height="11.4" fill="#7e4632"/><ellipse cx="2.85" cy="3.42" rx="3.42" ry="2.508" fill="#1c2230"/><ellipse cx="5.13" cy="0.912" rx="3.9899999999999998" ry="1.3679999999999999" fill="#3a6a3a"/><ellipse cx="6.2700000000000005" cy="6.612" rx="2.85" ry="3.42" fill="#b95a42"/><ellipse cx="10.032" cy="5.13" rx="1.5960000000000003" ry="2.85" fill="#1e2440"/><ellipse cx="3.42" cy="9.120000000000001" rx="2.85" ry="2.2800000000000002" fill="#9a5a3c"/></g></svg>
<div class="t" style="left:1041.5px;top:234.90px;font-size:8px;height:8px;line-height:8px;color:#333;font-weight:400;-webkit-text-stroke-width:0.1px">系统管理员</div>
<div class="t" style="left:1137.3px;top:234.90px;font-size:8px;height:8px;line-height:8px;color:#4f86ee;font-weight:400;-webkit-text-stroke-width:0.1px">编辑</div>
<div class="t" style="left:1155.8999999999999px;top:234.90px;font-size:8px;height:8px;line-height:8px;color:#e5484d;font-weight:400;-webkit-text-stroke-width:0.1px">删除</div>
<div class="t" style="left:1174.4999999999998px;top:234.90px;font-size:8px;height:8px;line-height:8px;color:#4f86ee;font-weight:400;-webkit-text-stroke-width:0.1px">复制</div>
<div class="t" style="left:1193.0999999999997px;top:234.90px;font-size:8px;height:8px;line-height:8px;color:#26a269;font-weight:400;-webkit-text-stroke-width:0.1px">生效</div>
<div class="abs" style="left:394.3px;top:248.2px;width:839.7px;height:1px;background:#eef0f4"></div>
<svg class="abs" style="left:399.7px;top:254.99999999999997px;" width="9.2" height="9.3" viewBox="0 0 9.2 9.3"><rect x="0" y="0" width="9.2" height="9.3" rx="1.4" fill="#3a9ae0"/><rect x="2" y="2" width="5.2" height="5.3" rx="0.9" fill="none" stroke="#cfe6f8" stroke-width="0.9"/><rect x="2" y="2" width="5.2" height="1.3" fill="#e6f2fc"/><rect x="3.4" y="4.3" width="2.4" height="1.6" fill="#9dcdf0"/></svg>
<div class="t" style="left:411px;top:256.30px;font-size:8px;height:8px;line-height:8px;color:#5089f2;font-weight:400;-webkit-text-stroke-width:0.05px">2024年度利巴韦林数据收集表</div>
<div class="t" style="left:562.2px;top:256.30px;font-size:8px;height:8px;line-height:8px;color:#333;font-weight:400;-webkit-text-stroke-width:0.1px">利巴韦林</div>
<div class="abs" style="left:643.6px;top:253.59999999999997px;width:21px;height:11.6px;background:#5d93f5;border-radius:2px"></div>
<div class="t" style="left:643.6px;width:21.00px;text-align:center;top:256.50px;font-size:7px;height:7px;line-height:7px;color:#f4f8ff;font-weight:400;-webkit-text-stroke-width:0">草稿</div>
<svg class="abs" style="left:701.8px;top:254.2px;" width="11.4" height="11.4" viewBox="0 0 11.4 11.4"><defs><clipPath id="av320"><circle cx="5.7" cy="5.7" r="5.7"/></clipPath></defs><g clip-path="url(#av320)"><rect width="11.4" height="11.4" fill="#7e4632"/><ellipse cx="2.85" cy="3.42" rx="3.42" ry="2.508" fill="#1c2230"/><ellipse cx="5.13" cy="0.912" rx="3.9899999999999998" ry="1.3679999999999999" fill="#3a6a3a"/><ellipse cx="6.2700000000000005" cy="6.612" rx="2.85" ry="3.42" fill="#b95a42"/><ellipse cx="10.032" cy="5.13" rx="1.5960000000000003" ry="2.85" fill="#1e2440"/><ellipse cx="3.42" cy="9.120000000000001" rx="2.85" ry="2.2800000000000002" fill="#9a5a3c"/></g></svg>
<div class="t" style="left:715.9px;top:256.30px;font-size:8px;height:8px;line-height:8px;color:#333;font-weight:400;-webkit-text-stroke-width:0.1px">系统管理员</div>
<div class="t" style="left:811.3px;top:255.90px;font-size:8.8px;height:8.8px;line-height:8.8px;color:#2a2a2a;font-weight:400;-webkit-text-stroke-width:0.12px;transform:scaleX(0.905);transform-origin:0 50%">2025-11-24 13:42:17</div>
<div class="t" style="left:919.3px;top:255.90px;font-size:8.8px;height:8.8px;line-height:8.8px;color:#2a2a2a;font-weight:400;-webkit-text-stroke-width:0.12px;transform:scaleX(0.905);transform-origin:0 50%">2025-11-24 13:42:17</div>
<svg class="abs" style="left:1027.5px;top:254.2px;" width="11.4" height="11.4" viewBox="0 0 11.4 11.4"><defs><clipPath id="av324"><circle cx="5.7" cy="5.7" r="5.7"/></clipPath></defs><g clip-path="url(#av324)"><rect width="11.4" height="11.4" fill="#7e4632"/><ellipse cx="2.85" cy="3.42" rx="3.42" ry="2.508" fill="#1c2230"/><ellipse cx="5.13" cy="0.912" rx="3.9899999999999998" ry="1.3679999999999999" fill="#3a6a3a"/><ellipse cx="6.2700000000000005" cy="6.612" rx="2.85" ry="3.42" fill="#b95a42"/><ellipse cx="10.032" cy="5.13" rx="1.5960000000000003" ry="2.85" fill="#1e2440"/><ellipse cx="3.42" cy="9.120000000000001" rx="2.85" ry="2.2800000000000002" fill="#9a5a3c"/></g></svg>
<div class="t" style="left:1041.5px;top:256.30px;font-size:8px;height:8px;line-height:8px;color:#333;font-weight:400;-webkit-text-stroke-width:0.1px">系统管理员</div>
<div class="t" style="left:1137.3px;top:256.30px;font-size:8px;height:8px;line-height:8px;color:#4f86ee;font-weight:400;-webkit-text-stroke-width:0.1px">编辑</div>
<div class="t" style="left:1155.8999999999999px;top:256.30px;font-size:8px;height:8px;line-height:8px;color:#e5484d;font-weight:400;-webkit-text-stroke-width:0.1px">删除</div>
<div class="t" style="left:1174.4999999999998px;top:256.30px;font-size:8px;height:8px;line-height:8px;color:#4f86ee;font-weight:400;-webkit-text-stroke-width:0.1px">复制</div>
<div class="t" style="left:1193.0999999999997px;top:256.30px;font-size:8px;height:8px;line-height:8px;color:#26a269;font-weight:400;-webkit-text-stroke-width:0.1px">生效</div>
<div class="abs" style="left:394.3px;top:270.6px;width:839.7px;height:20.4px;background:#fafafa"></div>
<div class="abs" style="left:394.3px;top:269.6px;width:839.7px;height:1px;background:#eef0f4"></div>
<svg class="abs" style="left:399.7px;top:276.40000000000003px;" width="9.2" height="9.3" viewBox="0 0 9.2 9.3"><rect x="0" y="0" width="9.2" height="9.3" rx="1.4" fill="#3a9ae0"/><rect x="2" y="2" width="5.2" height="5.3" rx="0.9" fill="none" stroke="#cfe6f8" stroke-width="0.9"/><rect x="2" y="2" width="5.2" height="1.3" fill="#e6f2fc"/><rect x="3.4" y="4.3" width="2.4" height="1.6" fill="#9dcdf0"/></svg>
<div class="t" style="left:411px;top:277.70px;font-size:8px;height:8px;line-height:8px;color:#5089f2;font-weight:400;-webkit-text-stroke-width:0.05px">2024年度瑞德西韦数据收集表</div>
<div class="t" style="left:562.2px;top:277.70px;font-size:8px;height:8px;line-height:8px;color:#333;font-weight:400;-webkit-text-stroke-width:0.1px">瑞德西韦</div>
<div class="abs" style="left:643.6px;top:275.0px;width:21px;height:11.6px;background:#5d93f5;border-radius:2px"></div>
<div class="t" style="left:643.6px;width:21.00px;text-align:center;top:277.90px;font-size:7px;height:7px;line-height:7px;color:#f4f8ff;font-weight:400;-webkit-text-stroke-width:0">草稿</div>
<svg class="abs" style="left:701.8px;top:275.6px;" width="11.4" height="11.4" viewBox="0 0 11.4 11.4"><defs><clipPath id="av337"><circle cx="5.7" cy="5.7" r="5.7"/></clipPath></defs><g clip-path="url(#av337)"><rect width="11.4" height="11.4" fill="#7e4632"/><ellipse cx="2.85" cy="3.42" rx="3.42" ry="2.508" fill="#1c2230"/><ellipse cx="5.13" cy="0.912" rx="3.9899999999999998" ry="1.3679999999999999" fill="#3a6a3a"/><ellipse cx="6.2700000000000005" cy="6.612" rx="2.85" ry="3.42" fill="#b95a42"/><ellipse cx="10.032" cy="5.13" rx="1.5960000000000003" ry="2.85" fill="#1e2440"/><ellipse cx="3.42" cy="9.120000000000001" rx="2.85" ry="2.2800000000000002" fill="#9a5a3c"/></g></svg>
<div class="t" style="left:715.9px;top:277.70px;font-size:8px;height:8px;line-height:8px;color:#333;font-weight:400;-webkit-text-stroke-width:0.1px">系统管理员</div>
<div class="t" style="left:811.3px;top:277.30px;font-size:8.8px;height:8.8px;line-height:8.8px;color:#2a2a2a;font-weight:400;-webkit-text-stroke-width:0.12px;transform:scaleX(0.905);transform-origin:0 50%">2025-11-24 13:42:01</div>
<div class="t" style="left:919.3px;top:277.30px;font-size:8.8px;height:8.8px;line-height:8.8px;color:#2a2a2a;font-weight:400;-webkit-text-stroke-width:0.12px;transform:scaleX(0.905);transform-origin:0 50%">2025-11-24 13:42:01</div>
<svg class="abs" style="left:1027.5px;top:275.6px;" width="11.4" height="11.4" viewBox="0 0 11.4 11.4"><defs><clipPath id="av341"><circle cx="5.7" cy="5.7" r="5.7"/></clipPath></defs><g clip-path="url(#av341)"><rect width="11.4" height="11.4" fill="#7e4632"/><ellipse cx="2.85" cy="3.42" rx="3.42" ry="2.508" fill="#1c2230"/><ellipse cx="5.13" cy="0.912" rx="3.9899999999999998" ry="1.3679999999999999" fill="#3a6a3a"/><ellipse cx="6.2700000000000005" cy="6.612" rx="2.85" ry="3.42" fill="#b95a42"/><ellipse cx="10.032" cy="5.13" rx="1.5960000000000003" ry="2.85" fill="#1e2440"/><ellipse cx="3.42" cy="9.120000000000001" rx="2.85" ry="2.2800000000000002" fill="#9a5a3c"/></g></svg>
<div class="t" style="left:1041.5px;top:277.70px;font-size:8px;height:8px;line-height:8px;color:#333;font-weight:400;-webkit-text-stroke-width:0.1px">系统管理员</div>
<div class="t" style="left:1137.3px;top:277.70px;font-size:8px;height:8px;line-height:8px;color:#4f86ee;font-weight:400;-webkit-text-stroke-width:0.1px">编辑</div>
<div class="t" style="left:1155.8999999999999px;top:277.70px;font-size:8px;height:8px;line-height:8px;color:#e5484d;font-weight:400;-webkit-text-stroke-width:0.1px">删除</div>
<div class="t" style="left:1174.4999999999998px;top:277.70px;font-size:8px;height:8px;line-height:8px;color:#4f86ee;font-weight:400;-webkit-text-stroke-width:0.1px">复制</div>
<div class="t" style="left:1193.0999999999997px;top:277.70px;font-size:8px;height:8px;line-height:8px;color:#26a269;font-weight:400;-webkit-text-stroke-width:0.1px">生效</div>
<div class="abs" style="left:394.3px;top:291.0px;width:839.7px;height:1px;background:#eef0f4"></div>
<svg class="abs" style="left:399.7px;top:297.8px;" width="9.2" height="9.3" viewBox="0 0 9.2 9.3"><rect x="0" y="0" width="9.2" height="9.3" rx="1.4" fill="#3a9ae0"/><rect x="2" y="2" width="5.2" height="5.3" rx="0.9" fill="none" stroke="#cfe6f8" stroke-width="0.9"/><rect x="2" y="2" width="5.2" height="1.3" fill="#e6f2fc"/><rect x="3.4" y="4.3" width="2.4" height="1.6" fill="#9dcdf0"/></svg>
<div class="t" style="left:411px;top:299.10px;font-size:8px;height:8px;line-height:8px;color:#5089f2;font-weight:400;-webkit-text-stroke-width:0.05px">2024年度阿昔洛韦数据收集表</div>
<div class="t" style="left:562.2px;top:299.10px;font-size:8px;height:8px;line-height:8px;color:#333;font-weight:400;-webkit-text-stroke-width:0.1px">阿昔洛韦</div>
<div class="abs" style="left:643.6px;top:296.4px;width:21px;height:11.6px;background:#5d93f5;border-radius:2px"></div>
<div class="t" style="left:643.6px;width:21.00px;text-align:center;top:299.30px;font-size:7px;height:7px;line-height:7px;color:#f4f8ff;font-weight:400;-webkit-text-stroke-width:0">草稿</div>
<svg class="abs" style="left:701.8px;top:297.0px;" width="11.4" height="11.4" viewBox="0 0 11.4 11.4"><defs><clipPath id="av353"><circle cx="5.7" cy="5.7" r="5.7"/></clipPath></defs><g clip-path="url(#av353)"><rect width="11.4" height="11.4" fill="#7e4632"/><ellipse cx="2.85" cy="3.42" rx="3.42" ry="2.508" fill="#1c2230"/><ellipse cx="5.13" cy="0.912" rx="3.9899999999999998" ry="1.3679999999999999" fill="#3a6a3a"/><ellipse cx="6.2700000000000005" cy="6.612" rx="2.85" ry="3.42" fill="#b95a42"/><ellipse cx="10.032" cy="5.13" rx="1.5960000000000003" ry="2.85" fill="#1e2440"/><ellipse cx="3.42" cy="9.120000000000001" rx="2.85" ry="2.2800000000000002" fill="#9a5a3c"/></g></svg>
<div class="t" style="left:715.9px;top:299.10px;font-size:8px;height:8px;line-height:8px;color:#333;font-weight:400;-webkit-text-stroke-width:0.1px">系统管理员</div>
<div class="t" style="left:811.3px;top:298.70px;font-size:8.8px;height:8.8px;line-height:8.8px;color:#2a2a2a;font-weight:400;-webkit-text-stroke-width:0.12px;transform:scaleX(0.905);transform-origin:0 50%">2025-11-24 13:41:41</div>
<div class="t" style="left:919.3px;top:298.70px;font-size:8.8px;height:8.8px;line-height:8.8px;color:#2a2a2a;font-weight:400;-webkit-text-stroke-width:0.12px;transform:scaleX(0.905);transform-origin:0 50%">2025-11-24 13:41:41</div>
<svg class="abs" style="left:1027.5px;top:297.0px;" width="11.4" height="11.4" viewBox="0 0 11.4 11.4"><defs><clipPath id="av357"><circle cx="5.7" cy="5.7" r="5.7"/></clipPath></defs><g clip-path="url(#av357)"><rect width="11.4" height="11.4" fill="#7e4632"/><ellipse cx="2.85" cy="3.42" rx="3.42" ry="2.508" fill="#1c2230"/><ellipse cx="5.13" cy="0.912" rx="3.9899999999999998" ry="1.3679999999999999" fill="#3a6a3a"/><ellipse cx="6.2700000000000005" cy="6.612" rx="2.85" ry="3.42" fill="#b95a42"/><ellipse cx="10.032" cy="5.13" rx="1.5960000000000003" ry="2.85" fill="#1e2440"/><ellipse cx="3.42" cy="9.120000000000001" rx="2.85" ry="2.2800000000000002" fill="#9a5a3c"/></g></svg>
<div class="t" style="left:1041.5px;top:299.10px;font-size:8px;height:8px;line-height:8px;color:#333;font-weight:400;-webkit-text-stroke-width:0.1px">系统管理员</div>
<div class="t" style="left:1137.3px;top:299.10px;font-size:8px;height:8px;line-height:8px;color:#4f86ee;font-weight:400;-webkit-text-stroke-width:0.1px">编辑</div>
<div class="t" style="left:1155.8999999999999px;top:299.10px;font-size:8px;height:8px;line-height:8px;color:#e5484d;font-weight:400;-webkit-text-stroke-width:0.1px">删除</div>
<div class="t" style="left:1174.4999999999998px;top:299.10px;font-size:8px;height:8px;line-height:8px;color:#4f86ee;font-weight:400;-webkit-text-stroke-width:0.1px">复制</div>
<div class="t" style="left:1193.0999999999997px;top:299.10px;font-size:8px;height:8px;line-height:8px;color:#26a269;font-weight:400;-webkit-text-stroke-width:0.1px">生效</div>
<div class="abs" style="left:394.3px;top:313.4px;width:839.7px;height:20.4px;background:#fafafa"></div>
<div class="abs" style="left:394.3px;top:312.4px;width:839.7px;height:1px;background:#eef0f4"></div>
<svg class="abs" style="left:399.7px;top:319.2px;" width="9.2" height="9.3" viewBox="0 0 9.2 9.3"><rect x="0" y="0" width="9.2" height="9.3" rx="1.4" fill="#3a9ae0"/><rect x="2" y="2" width="5.2" height="5.3" rx="0.9" fill="none" stroke="#cfe6f8" stroke-width="0.9"/><rect x="2" y="2" width="5.2" height="1.3" fill="#e6f2fc"/><rect x="3.4" y="4.3" width="2.4" height="1.6" fill="#9dcdf0"/></svg>
<div class="t" style="left:411px;top:320.50px;font-size:8px;height:8px;line-height:8px;color:#5089f2;font-weight:400;-webkit-text-stroke-width:0.05px">2024年度奥司他韦数据收集表</div>
<div class="t" style="left:562.2px;top:320.50px;font-size:8px;height:8px;line-height:8px;color:#333;font-weight:400;-webkit-text-stroke-width:0.1px">奥司他韦</div>
<div class="abs" style="left:643.6px;top:317.79999999999995px;width:21px;height:11.6px;background:#5d93f5;border-radius:2px"></div>
<div class="t" style="left:643.6px;width:21.00px;text-align:center;top:320.70px;font-size:7px;height:7px;line-height:7px;color:#f4f8ff;font-weight:400;-webkit-text-stroke-width:0">草稿</div>
<svg class="abs" style="left:701.8px;top:318.4px;" width="11.4" height="11.4" viewBox="0 0 11.4 11.4"><defs><clipPath id="av370"><circle cx="5.7" cy="5.7" r="5.7"/></clipPath></defs><g clip-path="url(#av370)"><rect width="11.4" height="11.4" fill="#7e4632"/><ellipse cx="2.85" cy="3.42" rx="3.42" ry="2.508" fill="#1c2230"/><ellipse cx="5.13" cy="0.912" rx="3.9899999999999998" ry="1.3679999999999999" fill="#3a6a3a"/><ellipse cx="6.2700000000000005" cy="6.612" rx="2.85" ry="3.42" fill="#b95a42"/><ellipse cx="10.032" cy="5.13" rx="1.5960000000000003" ry="2.85" fill="#1e2440"/><ellipse cx="3.42" cy="9.120000000000001" rx="2.85" ry="2.2800000000000002" fill="#9a5a3c"/></g></svg>
<div class="t" style="left:715.9px;top:320.50px;font-size:8px;height:8px;line-height:8px;color:#333;font-weight:400;-webkit-text-stroke-width:0.1px">系统管理员</div>
<div class="t" style="left:811.3px;top:320.10px;font-size:8.8px;height:8.8px;line-height:8.8px;color:#2a2a2a;font-weight:400;-webkit-text-stroke-width:0.12px;transform:scaleX(0.905);transform-origin:0 50%">2025-11-24 13:41:17</div>
<div class="t" style="left:919.3px;top:320.10px;font-size:8.8px;height:8.8px;line-height:8.8px;color:#2a2a2a;font-weight:400;-webkit-text-stroke-width:0.12px;transform:scaleX(0.905);transform-origin:0 50%">2025-11-24 13:41:17</div>
<svg class="abs" style="left:1027.5px;top:318.4px;" width="11.4" height="11.4" viewBox="0 0 11.4 11.4"><defs><clipPath id="av374"><circle cx="5.7" cy="5.7" r="5.7"/></clipPath></defs><g clip-path="url(#av374)"><rect width="11.4" height="11.4" fill="#7e4632"/><ellipse cx="2.85" cy="3.42" rx="3.42" ry="2.508" fill="#1c2230"/><ellipse cx="5.13" cy="0.912" rx="3.9899999999999998" ry="1.3679999999999999" fill="#3a6a3a"/><ellipse cx="6.2700000000000005" cy="6.612" rx="2.85" ry="3.42" fill="#b95a42"/><ellipse cx="10.032" cy="5.13" rx="1.5960000000000003" ry="2.85" fill="#1e2440"/><ellipse cx="3.42" cy="9.120000000000001" rx="2.85" ry="2.2800000000000002" fill="#9a5a3c"/></g></svg>
<div class="t" style="left:1041.5px;top:320.50px;font-size:8px;height:8px;line-height:8px;color:#333;font-weight:400;-webkit-text-stroke-width:0.1px">系统管理员</div>
<div class="t" style="left:1137.3px;top:320.50px;font-size:8px;height:8px;line-height:8px;color:#4f86ee;font-weight:400;-webkit-text-stroke-width:0.1px">编辑</div>
<div class="t" style="left:1155.8999999999999px;top:320.50px;font-size:8px;height:8px;line-height:8px;color:#e5484d;font-weight:400;-webkit-text-stroke-width:0.1px">删除</div>
<div class="t" style="left:1174.4999999999998px;top:320.50px;font-size:8px;height:8px;line-height:8px;color:#4f86ee;font-weight:400;-webkit-text-stroke-width:0.1px">复制</div>
<div class="t" style="left:1193.0999999999997px;top:320.50px;font-size:8px;height:8px;line-height:8px;color:#26a269;font-weight:400;-webkit-text-stroke-width:0.1px">生效</div>
<div class="abs" style="left:394.3px;top:333.79999999999995px;width:839.7px;height:1px;background:#eef0f4"></div>
<svg class="abs" style="left:399.7px;top:340.59999999999997px;" width="9.2" height="9.3" viewBox="0 0 9.2 9.3"><rect x="0" y="0" width="9.2" height="9.3" rx="1.4" fill="#3a9ae0"/><rect x="2" y="2" width="5.2" height="5.3" rx="0.9" fill="none" stroke="#cfe6f8" stroke-width="0.9"/><rect x="2" y="2" width="5.2" height="1.3" fill="#e6f2fc"/><rect x="3.4" y="4.3" width="2.4" height="1.6" fill="#9dcdf0"/></svg>
<div class="t" style="left:411px;top:341.90px;font-size:8px;height:8px;line-height:8px;color:#5089f2;font-weight:400;-webkit-text-stroke-width:0.05px">2024年度环丙沙星数据收集表</div>
<div class="t" style="left:562.2px;top:341.90px;font-size:8px;height:8px;line-height:8px;color:#333;font-weight:400;-webkit-text-stroke-width:0.1px">环丙沙星</div>
<div class="abs" style="left:643.6px;top:339.19999999999993px;width:21px;height:11.6px;background:#5d93f5;border-radius:2px"></div>
<div class="t" style="left:643.6px;width:21.00px;text-align:center;top:342.10px;font-size:7px;height:7px;line-height:7px;color:#f4f8ff;font-weight:400;-webkit-text-stroke-width:0">草稿</div>
<svg class="abs" style="left:701.8px;top:339.79999999999995px;" width="11.4" height="11.4" viewBox="0 0 11.4 11.4"><defs><clipPath id="av386"><circle cx="5.7" cy="5.7" r="5.7"/></clipPath></defs><g clip-path="url(#av386)"><rect width="11.4" height="11.4" fill="#7e4632"/><ellipse cx="2.85" cy="3.42" rx="3.42" ry="2.508" fill="#1c2230"/><ellipse cx="5.13" cy="0.912" rx="3.9899999999999998" ry="1.3679999999999999" fill="#3a6a3a"/><ellipse cx="6.2700000000000005" cy="6.612" rx="2.85" ry="3.42" fill="#b95a42"/><ellipse cx="10.032" cy="5.13" rx="1.5960000000000003" ry="2.85" fill="#1e2440"/><ellipse cx="3.42" cy="9.120000000000001" rx="2.85" ry="2.2800000000000002" fill="#9a5a3c"/></g></svg>
<div class="t" style="left:715.9px;top:341.90px;font-size:8px;height:8px;line-height:8px;color:#333;font-weight:400;-webkit-text-stroke-width:0.1px">系统管理员</div>
<div class="t" style="left:811.3px;top:341.50px;font-size:8.8px;height:8.8px;line-height:8.8px;color:#2a2a2a;font-weight:400;-webkit-text-stroke-width:0.12px;transform:scaleX(0.905);transform-origin:0 50%">2025-11-24 13:40:59</div>
<div class="t" style="left:919.3px;top:341.50px;font-size:8.8px;height:8.8px;line-height:8.8px;color:#2a2a2a;font-weight:400;-webkit-text-stroke-width:0.12px;transform:scaleX(0.905);transform-origin:0 50%">2025-11-24 13:40:59</div>
<svg class="abs" style="left:1027.5px;top:339.79999999999995px;" width="11.4" height="11.4" viewBox="0 0 11.4 11.4"><defs><clipPath id="av390"><circle cx="5.7" cy="5.7" r="5.7"/></clipPath></defs><g clip-path="url(#av390)"><rect width="11.4" height="11.4" fill="#7e4632"/><ellipse cx="2.85" cy="3.42" rx="3.42" ry="2.508" fill="#1c2230"/><ellipse cx="5.13" cy="0.912" rx="3.9899999999999998" ry="1.3679999999999999" fill="#3a6a3a"/><ellipse cx="6.2700000000000005" cy="6.612" rx="2.85" ry="3.42" fill="#b95a42"/><ellipse cx="10.032" cy="5.13" rx="1.5960000000000003" ry="2.85" fill="#1e2440"/><ellipse cx="3.42" cy="9.120000000000001" rx="2.85" ry="2.2800000000000002" fill="#9a5a3c"/></g></svg>
<div class="t" style="left:1041.5px;top:341.90px;font-size:8px;height:8px;line-height:8px;color:#333;font-weight:400;-webkit-text-stroke-width:0.1px">系统管理员</div>
<div class="t" style="left:1137.3px;top:341.90px;font-size:8px;height:8px;line-height:8px;color:#4f86ee;font-weight:400;-webkit-text-stroke-width:0.1px">编辑</div>
<div class="t" style="left:1155.8999999999999px;top:341.90px;font-size:8px;height:8px;line-height:8px;color:#e5484d;font-weight:400;-webkit-text-stroke-width:0.1px">删除</div>
<div class="t" style="left:1174.4999999999998px;top:341.90px;font-size:8px;height:8px;line-height:8px;color:#4f86ee;font-weight:400;-webkit-text-stroke-width:0.1px">复制</div>
<div class="t" style="left:1193.0999999999997px;top:341.90px;font-size:8px;height:8px;line-height:8px;color:#26a269;font-weight:400;-webkit-text-stroke-width:0.1px">生效</div>
<div class="abs" style="left:394.3px;top:356.2px;width:839.7px;height:20.4px;background:#fafafa"></div>
<div class="abs" style="left:394.3px;top:355.2px;width:839.7px;height:1px;background:#eef0f4"></div>
<svg class="abs" style="left:399.7px;top:362.0px;" width="9.2" height="9.3" viewBox="0 0 9.2 9.3"><rect x="0" y="0" width="9.2" height="9.3" rx="1.4" fill="#3a9ae0"/><rect x="2" y="2" width="5.2" height="5.3" rx="0.9" fill="none" stroke="#cfe6f8" stroke-width="0.9"/><rect x="2" y="2" width="5.2" height="1.3" fill="#e6f2fc"/><rect x="3.4" y="4.3" width="2.4" height="1.6" fill="#9dcdf0"/></svg>
<div class="t" style="left:411px;top:363.30px;font-size:8px;height:8px;line-height:8px;color:#5089f2;font-weight:400;-webkit-text-stroke-width:0.05px">2024年度左氧氟沙星数据收集表</div>
<div class="t" style="left:562.2px;top:363.30px;font-size:8px;height:8px;line-height:8px;color:#333;font-weight:400;-webkit-text-stroke-width:0.1px">左氧氟沙星</div>
<div class="abs" style="left:643.6px;top:360.59999999999997px;width:21px;height:11.6px;background:#5d93f5;border-radius:2px"></div>
<div class="t" style="left:643.6px;width:21.00px;text-align:center;top:363.50px;font-size:7px;height:7px;line-height:7px;color:#f4f8ff;font-weight:400;-webkit-text-stroke-width:0">草稿</div>
<svg class="abs" style="left:701.8px;top:361.2px;" width="11.4" height="11.4" viewBox="0 0 11.4 11.4"><defs><clipPath id="av403"><circle cx="5.7" cy="5.7" r="5.7"/></clipPath></defs><g clip-path="url(#av403)"><rect width="11.4" height="11.4" fill="#7e4632"/><ellipse cx="2.85" cy="3.42" rx="3.42" ry="2.508" fill="#1c2230"/><ellipse cx="5.13" cy="0.912" rx="3.9899999999999998" ry="1.3679999999999999" fill="#3a6a3a"/><ellipse cx="6.2700000000000005" cy="6.612" rx="2.85" ry="3.42" fill="#b95a42"/><ellipse cx="10.032" cy="5.13" rx="1.5960000000000003" ry="2.85" fill="#1e2440"/><ellipse cx="3.42" cy="9.120000000000001" rx="2.85" ry="2.2800000000000002" fill="#9a5a3c"/></g></svg>
<div class="t" style="left:715.9px;top:363.30px;font-size:8px;height:8px;line-height:8px;color:#333;font-weight:400;-webkit-text-stroke-width:0.1px">系统管理员</div>
<div class="t" style="left:811.3px;top:362.90px;font-size:8.8px;height:8.8px;line-height:8.8px;color:#2a2a2a;font-weight:400;-webkit-text-stroke-width:0.12px;transform:scaleX(0.905);transform-origin:0 50%">2025-11-24 13:40:30</div>
<div class="t" style="left:919.3px;top:362.90px;font-size:8.8px;height:8.8px;line-height:8.8px;color:#2a2a2a;font-weight:400;-webkit-text-stroke-width:0.12px;transform:scaleX(0.905);transform-origin:0 50%">2025-11-24 13:40:30</div>
<svg class="abs" style="left:1027.5px;top:361.2px;" width="11.4" height="11.4" viewBox="0 0 11.4 11.4"><defs><clipPath id="av407"><circle cx="5.7" cy="5.7" r="5.7"/></clipPath></defs><g clip-path="url(#av407)"><rect width="11.4" height="11.4" fill="#7e4632"/><ellipse cx="2.85" cy="3.42" rx="3.42" ry="2.508" fill="#1c2230"/><ellipse cx="5.13" cy="0.912" rx="3.9899999999999998" ry="1.3679999999999999" fill="#3a6a3a"/><ellipse cx="6.2700000000000005" cy="6.612" rx="2.85" ry="3.42" fill="#b95a42"/><ellipse cx="10.032" cy="5.13" rx="1.5960000000000003" ry="2.85" fill="#1e2440"/><ellipse cx="3.42" cy="9.120000000000001" rx="2.85" ry="2.2800000000000002" fill="#9a5a3c"/></g></svg>
<div class="t" style="left:1041.5px;top:363.30px;font-size:8px;height:8px;line-height:8px;color:#333;font-weight:400;-webkit-text-stroke-width:0.1px">系统管理员</div>
<div class="t" style="left:1137.3px;top:363.30px;font-size:8px;height:8px;line-height:8px;color:#4f86ee;font-weight:400;-webkit-text-stroke-width:0.1px">编辑</div>
<div class="t" style="left:1155.8999999999999px;top:363.30px;font-size:8px;height:8px;line-height:8px;color:#e5484d;font-weight:400;-webkit-text-stroke-width:0.1px">删除</div>
<div class="t" style="left:1174.4999999999998px;top:363.30px;font-size:8px;height:8px;line-height:8px;color:#4f86ee;font-weight:400;-webkit-text-stroke-width:0.1px">复制</div>
<div class="t" style="left:1193.0999999999997px;top:363.30px;font-size:8px;height:8px;line-height:8px;color:#26a269;font-weight:400;-webkit-text-stroke-width:0.1px">生效</div>
<div class="abs" style="left:394.3px;top:376.6px;width:839.7px;height:1px;background:#eef0f4"></div>
<svg class="abs" style="left:399.7px;top:383.40000000000003px;" width="9.2" height="9.3" viewBox="0 0 9.2 9.3"><rect x="0" y="0" width="9.2" height="9.3" rx="1.4" fill="#3a9ae0"/><rect x="2" y="2" width="5.2" height="5.3" rx="0.9" fill="none" stroke="#cfe6f8" stroke-width="0.9"/><rect x="2" y="2" width="5.2" height="1.3" fill="#e6f2fc"/><rect x="3.4" y="4.3" width="2.4" height="1.6" fill="#9dcdf0"/></svg>
<div class="t" style="left:411px;top:384.70px;font-size:8px;height:8px;line-height:8px;color:#5089f2;font-weight:400;-webkit-text-stroke-width:0.05px">2024年度红霉素数据收集表</div>
<div class="t" style="left:562.2px;top:384.70px;font-size:8px;height:8px;line-height:8px;color:#333;font-weight:400;-webkit-text-stroke-width:0.1px">红霉素</div>
<div class="abs" style="left:643.6px;top:382.0px;width:21px;height:11.6px;background:#5d93f5;border-radius:2px"></div>
<div class="t" style="left:643.6px;width:21.00px;text-align:center;top:384.90px;font-size:7px;height:7px;line-height:7px;color:#f4f8ff;font-weight:400;-webkit-text-stroke-width:0">草稿</div>
<svg class="abs" style="left:701.8px;top:382.6px;" width="11.4" height="11.4" viewBox="0 0 11.4 11.4"><defs><clipPath id="av419"><circle cx="5.7" cy="5.7" r="5.7"/></clipPath></defs><g clip-path="url(#av419)"><rect width="11.4" height="11.4" fill="#7e4632"/><ellipse cx="2.85" cy="3.42" rx="3.42" ry="2.508" fill="#1c2230"/><ellipse cx="5.13" cy="0.912" rx="3.9899999999999998" ry="1.3679999999999999" fill="#3a6a3a"/><ellipse cx="6.2700000000000005" cy="6.612" rx="2.85" ry="3.42" fill="#b95a42"/><ellipse cx="10.032" cy="5.13" rx="1.5960000000000003" ry="2.85" fill="#1e2440"/><ellipse cx="3.42" cy="9.120000000000001" rx="2.85" ry="2.2800000000000002" fill="#9a5a3c"/></g></svg>
<div class="t" style="left:715.9px;top:384.70px;font-size:8px;height:8px;line-height:8px;color:#333;font-weight:400;-webkit-text-stroke-width:0.1px">系统管理员</div>
<div class="t" style="left:811.3px;top:384.30px;font-size:8.8px;height:8.8px;line-height:8.8px;color:#2a2a2a;font-weight:400;-webkit-text-stroke-width:0.12px;transform:scaleX(0.905);transform-origin:0 50%">2025-11-24 13:39:50</div>
<div class="t" style="left:919.3px;top:384.30px;font-size:8.8px;height:8.8px;line-height:8.8px;color:#2a2a2a;font-weight:400;-webkit-text-stroke-width:0.12px;transform:scaleX(0.905);transform-origin:0 50%">2025-11-24 13:39:50</div>
<svg class="abs" style="left:1027.5px;top:382.6px;" width="11.4" height="11.4" viewBox="0 0 11.4 11.4"><defs><clipPath id="av423"><circle cx="5.7" cy="5.7" r="5.7"/></clipPath></defs><g clip-path="url(#av423)"><rect width="11.4" height="11.4" fill="#7e4632"/><ellipse cx="2.85" cy="3.42" rx="3.42" ry="2.508" fill="#1c2230"/><ellipse cx="5.13" cy="0.912" rx="3.9899999999999998" ry="1.3679999999999999" fill="#3a6a3a"/><ellipse cx="6.2700000000000005" cy="6.612" rx="2.85" ry="3.42" fill="#b95a42"/><ellipse cx="10.032" cy="5.13" rx="1.5960000000000003" ry="2.85" fill="#1e2440"/><ellipse cx="3.42" cy="9.120000000000001" rx="2.85" ry="2.2800000000000002" fill="#9a5a3c"/></g></svg>
<div class="t" style="left:1041.5px;top:384.70px;font-size:8px;height:8px;line-height:8px;color:#333;font-weight:400;-webkit-text-stroke-width:0.1px">系统管理员</div>
<div class="t" style="left:1137.3px;top:384.70px;font-size:8px;height:8px;line-height:8px;color:#4f86ee;font-weight:400;-webkit-text-stroke-width:0.1px">编辑</div>
<div class="t" style="left:1155.8999999999999px;top:384.70px;font-size:8px;height:8px;line-height:8px;color:#e5484d;font-weight:400;-webkit-text-stroke-width:0.1px">删除</div>
<div class="t" style="left:1174.4999999999998px;top:384.70px;font-size:8px;height:8px;line-height:8px;color:#4f86ee;font-weight:400;-webkit-text-stroke-width:0.1px">复制</div>
<div class="t" style="left:1193.0999999999997px;top:384.70px;font-size:8px;height:8px;line-height:8px;color:#26a269;font-weight:400;-webkit-text-stroke-width:0.1px">生效</div>
<div class="abs" style="left:394.3px;top:399.0px;width:839.7px;height:20.4px;background:#fafafa"></div>
<div class="abs" style="left:394.3px;top:398.0px;width:839.7px;height:1px;background:#eef0f4"></div>
<svg class="abs" style="left:399.7px;top:404.8px;" width="9.2" height="9.3" viewBox="0 0 9.2 9.3"><rect x="0" y="0" width="9.2" height="9.3" rx="1.4" fill="#3a9ae0"/><rect x="2" y="2" width="5.2" height="5.3" rx="0.9" fill="none" stroke="#cfe6f8" stroke-width="0.9"/><rect x="2" y="2" width="5.2" height="1.3" fill="#e6f2fc"/><rect x="3.4" y="4.3" width="2.4" height="1.6" fill="#9dcdf0"/></svg>
<div class="t" style="left:411px;top:406.10px;font-size:8px;height:8px;line-height:8px;color:#5089f2;font-weight:400;-webkit-text-stroke-width:0.05px">2024年度阿奇霉素数据收集表</div>
<div class="t" style="left:562.2px;top:406.10px;font-size:8px;height:8px;line-height:8px;color:#333;font-weight:400;-webkit-text-stroke-width:0.1px">阿奇霉素</div>
<div class="abs" style="left:643.6px;top:403.4px;width:28px;height:11.6px;background:#3bb27a;border-radius:2px"></div>
<div class="t" style="left:643.6px;width:28.00px;text-align:center;top:406.30px;font-size:7px;height:7px;line-height:7px;color:#f4fff8;font-weight:400;-webkit-text-stroke-width:0">已生效</div>
<svg class="abs" style="left:701.8px;top:404.0px;" width="11.4" height="11.4" viewBox="0 0 11.4 11.4"><defs><clipPath id="av436"><circle cx="5.7" cy="5.7" r="5.7"/></clipPath></defs><g clip-path="url(#av436)"><rect width="11.4" height="11.4" fill="#7e4632"/><ellipse cx="2.85" cy="3.42" rx="3.42" ry="2.508" fill="#1c2230"/><ellipse cx="5.13" cy="0.912" rx="3.9899999999999998" ry="1.3679999999999999" fill="#3a6a3a"/><ellipse cx="6.2700000000000005" cy="6.612" rx="2.85" ry="3.42" fill="#b95a42"/><ellipse cx="10.032" cy="5.13" rx="1.5960000000000003" ry="2.85" fill="#1e2440"/><ellipse cx="3.42" cy="9.120000000000001" rx="2.85" ry="2.2800000000000002" fill="#9a5a3c"/></g></svg>
<div class="t" style="left:715.9px;top:406.10px;font-size:8px;height:8px;line-height:8px;color:#333;font-weight:400;-webkit-text-stroke-width:0.1px">系统管理员</div>
<div class="t" style="left:811.3px;top:405.70px;font-size:8.8px;height:8.8px;line-height:8.8px;color:#2a2a2a;font-weight:400;-webkit-text-stroke-width:0.12px;transform:scaleX(0.905);transform-origin:0 50%">2025-11-24 13:39:27</div>
<div class="t" style="left:919.3px;top:405.70px;font-size:8.8px;height:8.8px;line-height:8.8px;color:#2a2a2a;font-weight:400;-webkit-text-stroke-width:0.12px;transform:scaleX(0.905);transform-origin:0 50%">2025-11-24 13:43:56</div>
<svg class="abs" style="left:1027.5px;top:404.0px;" width="11.4" height="11.4" viewBox="0 0 11.4 11.4"><defs><clipPath id="av440"><circle cx="5.7" cy="5.7" r="5.7"/></clipPath></defs><g clip-path="url(#av440)"><rect width="11.4" height="11.4" fill="#7e4632"/><ellipse cx="2.85" cy="3.42" rx="3.42" ry="2.508" fill="#1c2230"/><ellipse cx="5.13" cy="0.912" rx="3.9899999999999998" ry="1.3679999999999999" fill="#3a6a3a"/><ellipse cx="6.2700000000000005" cy="6.612" rx="2.85" ry="3.42" fill="#b95a42"/><ellipse cx="10.032" cy="5.13" rx="1.5960000000000003" ry="2.85" fill="#1e2440"/><ellipse cx="3.42" cy="9.120000000000001" rx="2.85" ry="2.2800000000000002" fill="#9a5a3c"/></g></svg>
<div class="t" style="left:1041.5px;top:406.10px;font-size:8px;height:8px;line-height:8px;color:#333;font-weight:400;-webkit-text-stroke-width:0.1px">系统管理员</div>
<div class="t" style="left:1137.3px;top:406.10px;font-size:8px;height:8px;line-height:8px;color:#4f86ee;font-weight:400;-webkit-text-stroke-width:0.1px">复制</div>
<div class="t" style="left:1155.8999999999999px;top:406.10px;font-size:8px;height:8px;line-height:8px;color:#e5484d;font-weight:400;-webkit-text-stroke-width:0.1px">失效</div>
<div class="t" style="left:1174.4999999999998px;top:406.10px;font-size:8px;height:8px;line-height:8px;color:#e5484d;font-weight:400;-webkit-text-stroke-width:0.1px">变更</div>
<div class="abs" style="left:394.3px;top:419.4px;width:839.7px;height:1px;background:#eef0f4"></div>
<svg class="abs" style="left:399.7px;top:426.2px;" width="9.2" height="9.3" viewBox="0 0 9.2 9.3"><rect x="0" y="0" width="9.2" height="9.3" rx="1.4" fill="#3a9ae0"/><rect x="2" y="2" width="5.2" height="5.3" rx="0.9" fill="none" stroke="#cfe6f8" stroke-width="0.9"/><rect x="2" y="2" width="5.2" height="1.3" fill="#e6f2fc"/><rect x="3.4" y="4.3" width="2.4" height="1.6" fill="#9dcdf0"/></svg>
<div class="t" style="left:411px;top:427.50px;font-size:8px;height:8px;line-height:8px;color:#5089f2;font-weight:400;-webkit-text-stroke-width:0.05px">2024年度头孢克肟数据收集表</div>
<div class="t" style="left:562.2px;top:427.50px;font-size:8px;height:8px;line-height:8px;color:#333;font-weight:400;-webkit-text-stroke-width:0.1px">头孢克肟</div>
<div class="abs" style="left:643.6px;top:424.79999999999995px;width:28px;height:11.6px;background:#3bb27a;border-radius:2px"></div>
<div class="t" style="left:643.6px;width:28.00px;text-align:center;top:427.70px;font-size:7px;height:7px;line-height:7px;color:#f4fff8;font-weight:400;-webkit-text-stroke-width:0">已生效</div>
<svg class="abs" style="left:701.8px;top:425.4px;" width="11.4" height="11.4" viewBox="0 0 11.4 11.4"><defs><clipPath id="av451"><circle cx="5.7" cy="5.7" r="5.7"/></clipPath></defs><g clip-path="url(#av451)"><rect width="11.4" height="11.4" fill="#7e4632"/><ellipse cx="2.85" cy="3.42" rx="3.42" ry="2.508" fill="#1c2230"/><ellipse cx="5.13" cy="0.912" rx="3.9899999999999998" ry="1.3679999999999999" fill="#3a6a3a"/><ellipse cx="6.2700000000000005" cy="6.612" rx="2.85" ry="3.42" fill="#b95a42"/><ellipse cx="10.032" cy="5.13" rx="1.5960000000000003" ry="2.85" fill="#1e2440"/><ellipse cx="3.42" cy="9.120000000000001" rx="2.85" ry="2.2800000000000002" fill="#9a5a3c"/></g></svg>
<div class="t" style="left:715.9px;top:427.50px;font-size:8px;height:8px;line-height:8px;color:#333;font-weight:400;-webkit-text-stroke-width:0.1px">系统管理员</div>
<div class="t" style="left:811.3px;top:427.10px;font-size:8.8px;height:8.8px;line-height:8.8px;color:#2a2a2a;font-weight:400;-webkit-text-stroke-width:0.12px;transform:scaleX(0.905);transform-origin:0 50%">2025-11-24 13:39:05</div>
<div class="t" style="left:919.3px;top:427.10px;font-size:8.8px;height:8.8px;line-height:8.8px;color:#2a2a2a;font-weight:400;-webkit-text-stroke-width:0.12px;transform:scaleX(0.905);transform-origin:0 50%">2025-11-24 13:43:52</div>
<svg class="abs" style="left:1027.5px;top:425.4px;" width="11.4" height="11.4" viewBox="0 0 11.4 11.4"><defs><clipPath id="av455"><circle cx="5.7" cy="5.7" r="5.7"/></clipPath></defs><g clip-path="url(#av455)"><rect width="11.4" height="11.4" fill="#7e4632"/><ellipse cx="2.85" cy="3.42" rx="3.42" ry="2.508" fill="#1c2230"/><ellipse cx="5.13" cy="0.912" rx="3.9899999999999998" ry="1.3679999999999999" fill="#3a6a3a"/><ellipse cx="6.2700000000000005" cy="6.612" rx="2.85" ry="3.42" fill="#b95a42"/><ellipse cx="10.032" cy="5.13" rx="1.5960000000000003" ry="2.85" fill="#1e2440"/><ellipse cx="3.42" cy="9.120000000000001" rx="2.85" ry="2.2800000000000002" fill="#9a5a3c"/></g></svg>
<div class="t" style="left:1041.5px;top:427.50px;font-size:8px;height:8px;line-height:8px;color:#333;font-weight:400;-webkit-text-stroke-width:0.1px">系统管理员</div>
<div class="t" style="left:1137.3px;top:427.50px;font-size:8px;height:8px;line-height:8px;color:#4f86ee;font-weight:400;-webkit-text-stroke-width:0.1px">复制</div>
<div class="t" style="left:1155.8999999999999px;top:427.50px;font-size:8px;height:8px;line-height:8px;color:#e5484d;font-weight:400;-webkit-text-stroke-width:0.1px">失效</div>
<div class="t" style="left:1174.4999999999998px;top:427.50px;font-size:8px;height:8px;line-height:8px;color:#e5484d;font-weight:400;-webkit-text-stroke-width:0.1px">变更</div>
<div class="abs" style="left:394.3px;top:441.79999999999995px;width:839.7px;height:20.4px;background:#fafafa"></div>
<div class="abs" style="left:394.3px;top:440.79999999999995px;width:839.7px;height:1px;background:#eef0f4"></div>
<svg class="abs" style="left:399.7px;top:447.59999999999997px;" width="9.2" height="9.3" viewBox="0 0 9.2 9.3"><rect x="0" y="0" width="9.2" height="9.3" rx="1.4" fill="#3a9ae0"/><rect x="2" y="2" width="5.2" height="5.3" rx="0.9" fill="none" stroke="#cfe6f8" stroke-width="0.9"/><rect x="2" y="2" width="5.2" height="1.3" fill="#e6f2fc"/><rect x="3.4" y="4.3" width="2.4" height="1.6" fill="#9dcdf0"/></svg>
<div class="t" style="left:411px;top:448.90px;font-size:8px;height:8px;line-height:8px;color:#5089f2;font-weight:400;-webkit-text-stroke-width:0.05px">2024年度头孢呋辛数据收集表</div>
<div class="t" style="left:562.2px;top:448.90px;font-size:8px;height:8px;line-height:8px;color:#333;font-weight:400;-webkit-text-stroke-width:0.1px">头孢呋辛</div>
<div class="abs" style="left:643.6px;top:446.19999999999993px;width:28px;height:11.6px;background:#3bb27a;border-radius:2px"></div>
<div class="t" style="left:643.6px;width:28.00px;text-align:center;top:449.10px;font-size:7px;height:7px;line-height:7px;color:#f4fff8;font-weight:400;-webkit-text-stroke-width:0">已生效</div>
<svg class="abs" style="left:701.8px;top:446.79999999999995px;" width="11.4" height="11.4" viewBox="0 0 11.4 11.4"><defs><clipPath id="av467"><circle cx="5.7" cy="5.7" r="5.7"/></clipPath></defs><g clip-path="url(#av467)"><rect width="11.4" height="11.4" fill="#7e4632"/><ellipse cx="2.85" cy="3.42" rx="3.42" ry="2.508" fill="#1c2230"/><ellipse cx="5.13" cy="0.912" rx="3.9899999999999998" ry="1.3679999999999999" fill="#3a6a3a"/><ellipse cx="6.2700000000000005" cy="6.612" rx="2.85" ry="3.42" fill="#b95a42"/><ellipse cx="10.032" cy="5.13" rx="1.5960000000000003" ry="2.85" fill="#1e2440"/><ellipse cx="3.42" cy="9.120000000000001" rx="2.85" ry="2.2800000000000002" fill="#9a5a3c"/></g></svg>
<div class="t" style="left:715.9px;top:448.90px;font-size:8px;height:8px;line-height:8px;color:#333;font-weight:400;-webkit-text-stroke-width:0.1px">系统管理员</div>
<div class="t" style="left:811.3px;top:448.50px;font-size:8.8px;height:8.8px;line-height:8.8px;color:#2a2a2a;font-weight:400;-webkit-text-stroke-width:0.12px;transform:scaleX(0.905);transform-origin:0 50%">2025-11-24 13:38:21</div>
<div class="t" style="left:919.3px;top:448.50px;font-size:8.8px;height:8.8px;line-height:8.8px;color:#2a2a2a;font-weight:400;-webkit-text-stroke-width:0.12px;transform:scaleX(0.905);transform-origin:0 50%">2025-11-24 13:43:49</div>
<svg class="abs" style="left:1027.5px;top:446.79999999999995px;" width="11.4" height="11.4" viewBox="0 0 11.4 11.4"><defs><clipPath id="av471"><circle cx="5.7" cy="5.7" r="5.7"/></clipPath></defs><g clip-path="url(#av471)"><rect width="11.4" height="11.4" fill="#7e4632"/><ellipse cx="2.85" cy="3.42" rx="3.42" ry="2.508" fill="#1c2230"/><ellipse cx="5.13" cy="0.912" rx="3.9899999999999998" ry="1.3679999999999999" fill="#3a6a3a"/><ellipse cx="6.2700000000000005" cy="6.612" rx="2.85" ry="3.42" fill="#b95a42"/><ellipse cx="10.032" cy="5.13" rx="1.5960000000000003" ry="2.85" fill="#1e2440"/><ellipse cx="3.42" cy="9.120000000000001" rx="2.85" ry="2.2800000000000002" fill="#9a5a3c"/></g></svg>
<div class="t" style="left:1041.5px;top:448.90px;font-size:8px;height:8px;line-height:8px;color:#333;font-weight:400;-webkit-text-stroke-width:0.1px">系统管理员</div>
<div class="t" style="left:1137.3px;top:448.90px;font-size:8px;height:8px;line-height:8px;color:#4f86ee;font-weight:400;-webkit-text-stroke-width:0.1px">复制</div>
<div class="t" style="left:1155.8999999999999px;top:448.90px;font-size:8px;height:8px;line-height:8px;color:#e5484d;font-weight:400;-webkit-text-stroke-width:0.1px">失效</div>
<div class="t" style="left:1174.4999999999998px;top:448.90px;font-size:8px;height:8px;line-height:8px;color:#e5484d;font-weight:400;-webkit-text-stroke-width:0.1px">变更</div>
<div class="abs" style="left:394.3px;top:462.19999999999993px;width:839.7px;height:1px;background:#eef0f4"></div>
<svg class="abs" style="left:399.7px;top:468.99999999999994px;" width="9.2" height="9.3" viewBox="0 0 9.2 9.3"><rect x="0" y="0" width="9.2" height="9.3" rx="1.4" fill="#3a9ae0"/><rect x="2" y="2" width="5.2" height="5.3" rx="0.9" fill="none" stroke="#cfe6f8" stroke-width="0.9"/><rect x="2" y="2" width="5.2" height="1.3" fill="#e6f2fc"/><rect x="3.4" y="4.3" width="2.4" height="1.6" fill="#9dcdf0"/></svg>
<div class="t" style="left:411px;top:470.30px;font-size:8px;height:8px;line-height:8px;color:#5089f2;font-weight:400;-webkit-text-stroke-width:0.05px">2024年度头孢曲松钠数据收集表</div>
<div class="t" style="left:562.2px;top:470.30px;font-size:8px;height:8px;line-height:8px;color:#333;font-weight:400;-webkit-text-stroke-width:0.1px">头孢曲松钠</div>
<div class="abs" style="left:643.6px;top:467.5999999999999px;width:28px;height:11.6px;background:#3bb27a;border-radius:2px"></div>
<div class="t" style="left:643.6px;width:28.00px;text-align:center;top:470.50px;font-size:7px;height:7px;line-height:7px;color:#f4fff8;font-weight:400;-webkit-text-stroke-width:0">已生效</div>
<svg class="abs" style="left:701.8px;top:468.19999999999993px;" width="11.4" height="11.4" viewBox="0 0 11.4 11.4"><defs><clipPath id="av482"><circle cx="5.7" cy="5.7" r="5.7"/></clipPath></defs><g clip-path="url(#av482)"><rect width="11.4" height="11.4" fill="#7e4632"/><ellipse cx="2.85" cy="3.42" rx="3.42" ry="2.508" fill="#1c2230"/><ellipse cx="5.13" cy="0.912" rx="3.9899999999999998" ry="1.3679999999999999" fill="#3a6a3a"/><ellipse cx="6.2700000000000005" cy="6.612" rx="2.85" ry="3.42" fill="#b95a42"/><ellipse cx="10.032" cy="5.13" rx="1.5960000000000003" ry="2.85" fill="#1e2440"/><ellipse cx="3.42" cy="9.120000000000001" rx="2.85" ry="2.2800000000000002" fill="#9a5a3c"/></g></svg>
<div class="t" style="left:715.9px;top:470.30px;font-size:8px;height:8px;line-height:8px;color:#333;font-weight:400;-webkit-text-stroke-width:0.1px">系统管理员</div>
<div class="t" style="left:811.3px;top:469.90px;font-size:8.8px;height:8.8px;line-height:8.8px;color:#2a2a2a;font-weight:400;-webkit-text-stroke-width:0.12px;transform:scaleX(0.905);transform-origin:0 50%">2025-11-24 13:37:57</div>
<div class="t" style="left:919.3px;top:469.90px;font-size:8.8px;height:8.8px;line-height:8.8px;color:#2a2a2a;font-weight:400;-webkit-text-stroke-width:0.12px;transform:scaleX(0.905);transform-origin:0 50%">2025-11-24 13:38:44</div>
<svg class="abs" style="left:1027.5px;top:468.19999999999993px;" width="11.4" height="11.4" viewBox="0 0 11.4 11.4"><defs><clipPath id="av486"><circle cx="5.7" cy="5.7" r="5.7"/></clipPath></defs><g clip-path="url(#av486)"><rect width="11.4" height="11.4" fill="#7e4632"/><ellipse cx="2.85" cy="3.42" rx="3.42" ry="2.508" fill="#1c2230"/><ellipse cx="5.13" cy="0.912" rx="3.9899999999999998" ry="1.3679999999999999" fill="#3a6a3a"/><ellipse cx="6.2700000000000005" cy="6.612" rx="2.85" ry="3.42" fill="#b95a42"/><ellipse cx="10.032" cy="5.13" rx="1.5960000000000003" ry="2.85" fill="#1e2440"/><ellipse cx="3.42" cy="9.120000000000001" rx="2.85" ry="2.2800000000000002" fill="#9a5a3c"/></g></svg>
<div class="t" style="left:1041.5px;top:470.30px;font-size:8px;height:8px;line-height:8px;color:#333;font-weight:400;-webkit-text-stroke-width:0.1px">系统管理员</div>
<div class="t" style="left:1137.3px;top:470.30px;font-size:8px;height:8px;line-height:8px;color:#4f86ee;font-weight:400;-webkit-text-stroke-width:0.1px">复制</div>
<div class="t" style="left:1155.8999999999999px;top:470.30px;font-size:8px;height:8px;line-height:8px;color:#e5484d;font-weight:400;-webkit-text-stroke-width:0.1px">失效</div>
<div class="t" style="left:1174.4999999999998px;top:470.30px;font-size:8px;height:8px;line-height:8px;color:#e5484d;font-weight:400;-webkit-text-stroke-width:0.1px">变更</div>
<div class="abs" style="left:394.3px;top:484.6px;width:839.7px;height:20.4px;background:#fafafa"></div>
<div class="abs" style="left:394.3px;top:483.6px;width:839.7px;height:1px;background:#eef0f4"></div>
<svg class="abs" style="left:399.7px;top:490.40000000000003px;" width="9.2" height="9.3" viewBox="0 0 9.2 9.3"><rect x="0" y="0" width="9.2" height="9.3" rx="1.4" fill="#3a9ae0"/><rect x="2" y="2" width="5.2" height="5.3" rx="0.9" fill="none" stroke="#cfe6f8" stroke-width="0.9"/><rect x="2" y="2" width="5.2" height="1.3" fill="#e6f2fc"/><rect x="3.4" y="4.3" width="2.4" height="1.6" fill="#9dcdf0"/></svg>
<div class="t" style="left:411px;top:491.70px;font-size:8px;height:8px;line-height:8px;color:#5089f2;font-weight:400;-webkit-text-stroke-width:0.05px">2024年度氨苄西林数据收集表</div>
<div class="t" style="left:562.2px;top:491.70px;font-size:8px;height:8px;line-height:8px;color:#333;font-weight:400;-webkit-text-stroke-width:0.1px">氨苄西林</div>
<div class="abs" style="left:643.6px;top:489.0px;width:28px;height:11.6px;background:#3bb27a;border-radius:2px"></div>
<div class="t" style="left:643.6px;width:28.00px;text-align:center;top:491.90px;font-size:7px;height:7px;line-height:7px;color:#f4fff8;font-weight:400;-webkit-text-stroke-width:0">已生效</div>
<svg class="abs" style="left:701.8px;top:489.6px;" width="11.4" height="11.4" viewBox="0 0 11.4 11.4"><defs><clipPath id="av498"><circle cx="5.7" cy="5.7" r="5.7"/></clipPath></defs><g clip-path="url(#av498)"><rect width="11.4" height="11.4" fill="#7e4632"/><ellipse cx="2.85" cy="3.42" rx="3.42" ry="2.508" fill="#1c2230"/><ellipse cx="5.13" cy="0.912" rx="3.9899999999999998" ry="1.3679999999999999" fill="#3a6a3a"/><ellipse cx="6.2700000000000005" cy="6.612" rx="2.85" ry="3.42" fill="#b95a42"/><ellipse cx="10.032" cy="5.13" rx="1.5960000000000003" ry="2.85" fill="#1e2440"/><ellipse cx="3.42" cy="9.120000000000001" rx="2.85" ry="2.2800000000000002" fill="#9a5a3c"/></g></svg>
<div class="t" style="left:715.9px;top:491.70px;font-size:8px;height:8px;line-height:8px;color:#333;font-weight:400;-webkit-text-stroke-width:0.1px">系统管理员</div>
<div class="t" style="left:811.3px;top:491.30px;font-size:8.8px;height:8.8px;line-height:8.8px;color:#2a2a2a;font-weight:400;-webkit-text-stroke-width:0.12px;transform:scaleX(0.905);transform-origin:0 50%">2025-11-24 13:37:09</div>
<div class="t" style="left:919.3px;top:491.30px;font-size:8.8px;height:8.8px;line-height:8.8px;color:#2a2a2a;font-weight:400;-webkit-text-stroke-width:0.12px;transform:scaleX(0.905);transform-origin:0 50%">2025-11-24 13:38:39</div>
<svg class="abs" style="left:1027.5px;top:489.6px;" width="11.4" height="11.4" viewBox="0 0 11.4 11.4"><defs><clipPath id="av502"><circle cx="5.7" cy="5.7" r="5.7"/></clipPath></defs><g clip-path="url(#av502)"><rect width="11.4" height="11.4" fill="#7e4632"/><ellipse cx="2.85" cy="3.42" rx="3.42" ry="2.508" fill="#1c2230"/><ellipse cx="5.13" cy="0.912" rx="3.9899999999999998" ry="1.3679999999999999" fill="#3a6a3a"/><ellipse cx="6.2700000000000005" cy="6.612" rx="2.85" ry="3.42" fill="#b95a42"/><ellipse cx="10.032" cy="5.13" rx="1.5960000000000003" ry="2.85" fill="#1e2440"/><ellipse cx="3.42" cy="9.120000000000001" rx="2.85" ry="2.2800000000000002" fill="#9a5a3c"/></g></svg>
<div class="t" style="left:1041.5px;top:491.70px;font-size:8px;height:8px;line-height:8px;color:#333;font-weight:400;-webkit-text-stroke-width:0.1px">系统管理员</div>
<div class="t" style="left:1137.3px;top:491.70px;font-size:8px;height:8px;line-height:8px;color:#4f86ee;font-weight:400;-webkit-text-stroke-width:0.1px">复制</div>
<div class="t" style="left:1155.8999999999999px;top:491.70px;font-size:8px;height:8px;line-height:8px;color:#e5484d;font-weight:400;-webkit-text-stroke-width:0.1px">失效</div>
<div class="t" style="left:1174.4999999999998px;top:491.70px;font-size:8px;height:8px;line-height:8px;color:#e5484d;font-weight:400;-webkit-text-stroke-width:0.1px">变更</div>
<div class="abs" style="left:394.3px;top:505.0px;width:839.7px;height:1px;background:#eef0f4"></div>
<svg class="abs" style="left:399.7px;top:511.80000000000007px;" width="9.2" height="9.3" viewBox="0 0 9.2 9.3"><rect x="0" y="0" width="9.2" height="9.3" rx="1.4" fill="#3a9ae0"/><rect x="2" y="2" width="5.2" height="5.3" rx="0.9" fill="none" stroke="#cfe6f8" stroke-width="0.9"/><rect x="2" y="2" width="5.2" height="1.3" fill="#e6f2fc"/><rect x="3.4" y="4.3" width="2.4" height="1.6" fill="#9dcdf0"/></svg>
<div class="t" style="left:411px;top:513.10px;font-size:8px;height:8px;line-height:8px;color:#5089f2;font-weight:400;-webkit-text-stroke-width:0.05px">2024年度阿莫西林数据收集表</div>
<div class="t" style="left:562.2px;top:513.10px;font-size:8px;height:8px;line-height:8px;color:#333;font-weight:400;-webkit-text-stroke-width:0.1px">阿莫西林</div>
<div class="abs" style="left:643.6px;top:510.40000000000003px;width:28px;height:11.6px;background:#3bb27a;border-radius:2px"></div>
<div class="t" style="left:643.6px;width:28.00px;text-align:center;top:513.30px;font-size:7px;height:7px;line-height:7px;color:#f4fff8;font-weight:400;-webkit-text-stroke-width:0">已生效</div>
<svg class="abs" style="left:701.8px;top:511.00000000000006px;" width="11.4" height="11.4" viewBox="0 0 11.4 11.4"><defs><clipPath id="av513"><circle cx="5.7" cy="5.7" r="5.7"/></clipPath></defs><g clip-path="url(#av513)"><rect width="11.4" height="11.4" fill="#7e4632"/><ellipse cx="2.85" cy="3.42" rx="3.42" ry="2.508" fill="#1c2230"/><ellipse cx="5.13" cy="0.912" rx="3.9899999999999998" ry="1.3679999999999999" fill="#3a6a3a"/><ellipse cx="6.2700000000000005" cy="6.612" rx="2.85" ry="3.42" fill="#b95a42"/><ellipse cx="10.032" cy="5.13" rx="1.5960000000000003" ry="2.85" fill="#1e2440"/><ellipse cx="3.42" cy="9.120000000000001" rx="2.85" ry="2.2800000000000002" fill="#9a5a3c"/></g></svg>
<div class="t" style="left:715.9px;top:513.10px;font-size:8px;height:8px;line-height:8px;color:#333;font-weight:400;-webkit-text-stroke-width:0.1px">系统管理员</div>
<div class="t" style="left:811.3px;top:512.70px;font-size:8.8px;height:8.8px;line-height:8.8px;color:#2a2a2a;font-weight:400;-webkit-text-stroke-width:0.12px;transform:scaleX(0.905);transform-origin:0 50%">2025-11-24 13:36:21</div>
<div class="t" style="left:919.3px;top:512.70px;font-size:8.8px;height:8.8px;line-height:8.8px;color:#2a2a2a;font-weight:400;-webkit-text-stroke-width:0.12px;transform:scaleX(0.905);transform-origin:0 50%">2025-11-24 13:38:36</div>
<svg class="abs" style="left:1027.5px;top:511.00000000000006px;" width="11.4" height="11.4" viewBox="0 0 11.4 11.4"><defs><clipPath id="av517"><circle cx="5.7" cy="5.7" r="5.7"/></clipPath></defs><g clip-path="url(#av517)"><rect width="11.4" height="11.4" fill="#7e4632"/><ellipse cx="2.85" cy="3.42" rx="3.42" ry="2.508" fill="#1c2230"/><ellipse cx="5.13" cy="0.912" rx="3.9899999999999998" ry="1.3679999999999999" fill="#3a6a3a"/><ellipse cx="6.2700000000000005" cy="6.612" rx="2.85" ry="3.42" fill="#b95a42"/><ellipse cx="10.032" cy="5.13" rx="1.5960000000000003" ry="2.85" fill="#1e2440"/><ellipse cx="3.42" cy="9.120000000000001" rx="2.85" ry="2.2800000000000002" fill="#9a5a3c"/></g></svg>
<div class="t" style="left:1041.5px;top:513.10px;font-size:8px;height:8px;line-height:8px;color:#333;font-weight:400;-webkit-text-stroke-width:0.1px">系统管理员</div>
<div class="t" style="left:1137.3px;top:513.10px;font-size:8px;height:8px;line-height:8px;color:#4f86ee;font-weight:400;-webkit-text-stroke-width:0.1px">复制</div>
<div class="t" style="left:1155.8999999999999px;top:513.10px;font-size:8px;height:8px;line-height:8px;color:#e5484d;font-weight:400;-webkit-text-stroke-width:0.1px">失效</div>
<div class="t" style="left:1174.4999999999998px;top:513.10px;font-size:8px;height:8px;line-height:8px;color:#e5484d;font-weight:400;-webkit-text-stroke-width:0.1px">变更</div>
<div class="abs" style="left:394.3px;top:527.4px;width:839.7px;height:20.4px;background:#fafafa"></div>
<div class="abs" style="left:394.3px;top:526.4px;width:839.7px;height:1px;background:#eef0f4"></div>
<svg class="abs" style="left:399.7px;top:533.2px;" width="9.2" height="9.3" viewBox="0 0 9.2 9.3"><rect x="0" y="0" width="9.2" height="9.3" rx="1.4" fill="#3a9ae0"/><rect x="2" y="2" width="5.2" height="5.3" rx="0.9" fill="none" stroke="#cfe6f8" stroke-width="0.9"/><rect x="2" y="2" width="5.2" height="1.3" fill="#e6f2fc"/><rect x="3.4" y="4.3" width="2.4" height="1.6" fill="#9dcdf0"/></svg>
<div class="t" style="left:411px;top:534.50px;font-size:8px;height:8px;line-height:8px;color:#5089f2;font-weight:400;-webkit-text-stroke-width:0.05px">2024年度阿司匹林肠溶片数据收集表</div>
<div class="t" style="left:562.2px;top:534.50px;font-size:8px;height:8px;line-height:8px;color:#333;font-weight:400;-webkit-text-stroke-width:0.1px">阿司匹林肠溶片</div>
<div class="abs" style="left:643.6px;top:531.8000000000001px;width:28px;height:11.6px;background:#3bb27a;border-radius:2px"></div>
<div class="t" style="left:643.6px;width:28.00px;text-align:center;top:534.70px;font-size:7px;height:7px;line-height:7px;color:#f4fff8;font-weight:400;-webkit-text-stroke-width:0">已生效</div>
<svg class="abs" style="left:701.8px;top:532.4px;" width="11.4" height="11.4" viewBox="0 0 11.4 11.4"><defs><clipPath id="av529"><circle cx="5.7" cy="5.7" r="5.7"/></clipPath></defs><g clip-path="url(#av529)"><rect width="11.4" height="11.4" fill="#7e4632"/><ellipse cx="2.85" cy="3.42" rx="3.42" ry="2.508" fill="#1c2230"/><ellipse cx="5.13" cy="0.912" rx="3.9899999999999998" ry="1.3679999999999999" fill="#3a6a3a"/><ellipse cx="6.2700000000000005" cy="6.612" rx="2.85" ry="3.42" fill="#b95a42"/><ellipse cx="10.032" cy="5.13" rx="1.5960000000000003" ry="2.85" fill="#1e2440"/><ellipse cx="3.42" cy="9.120000000000001" rx="2.85" ry="2.2800000000000002" fill="#9a5a3c"/></g></svg>
<div class="t" style="left:715.9px;top:534.50px;font-size:8px;height:8px;line-height:8px;color:#333;font-weight:400;-webkit-text-stroke-width:0.1px">系统管理员</div>
<div class="t" style="left:811.3px;top:534.10px;font-size:8.8px;height:8.8px;line-height:8.8px;color:#2a2a2a;font-weight:400;-webkit-text-stroke-width:0.12px;transform:scaleX(0.905);transform-origin:0 50%">2025-11-24 13:35:50</div>
<div class="t" style="left:919.3px;top:534.10px;font-size:8.8px;height:8.8px;line-height:8.8px;color:#2a2a2a;font-weight:400;-webkit-text-stroke-width:0.12px;transform:scaleX(0.905);transform-origin:0 50%">2025-11-24 13:38:32</div>
<svg class="abs" style="left:1027.5px;top:532.4px;" width="11.4" height="11.4" viewBox="0 0 11.4 11.4"><defs><clipPath id="av533"><circle cx="5.7" cy="5.7" r="5.7"/></clipPath></defs><g clip-path="url(#av533)"><rect width="11.4" height="11.4" fill="#7e4632"/><ellipse cx="2.85" cy="3.42" rx="3.42" ry="2.508" fill="#1c2230"/><ellipse cx="5.13" cy="0.912" rx="3.9899999999999998" ry="1.3679999999999999" fill="#3a6a3a"/><ellipse cx="6.2700000000000005" cy="6.612" rx="2.85" ry="3.42" fill="#b95a42"/><ellipse cx="10.032" cy="5.13" rx="1.5960000000000003" ry="2.85" fill="#1e2440"/><ellipse cx="3.42" cy="9.120000000000001" rx="2.85" ry="2.2800000000000002" fill="#9a5a3c"/></g></svg>
<div class="t" style="left:1041.5px;top:534.50px;font-size:8px;height:8px;line-height:8px;color:#333;font-weight:400;-webkit-text-stroke-width:0.1px">系统管理员</div>
<div class="t" style="left:1137.3px;top:534.50px;font-size:8px;height:8px;line-height:8px;color:#4f86ee;font-weight:400;-webkit-text-stroke-width:0.1px">复制</div>
<div class="t" style="left:1155.8999999999999px;top:534.50px;font-size:8px;height:8px;line-height:8px;color:#e5484d;font-weight:400;-webkit-text-stroke-width:0.1px">失效</div>
<div class="t" style="left:1174.4999999999998px;top:534.50px;font-size:8px;height:8px;line-height:8px;color:#e5484d;font-weight:400;-webkit-text-stroke-width:0.1px">变更</div>
<div class="abs" style="left:394.3px;top:547.8px;width:839.7px;height:1px;background:#eef0f4"></div>
<svg class="abs" style="left:399.7px;top:554.6px;" width="9.2" height="9.3" viewBox="0 0 9.2 9.3"><rect x="0" y="0" width="9.2" height="9.3" rx="1.4" fill="#3a9ae0"/><rect x="2" y="2" width="5.2" height="5.3" rx="0.9" fill="none" stroke="#cfe6f8" stroke-width="0.9"/><rect x="2" y="2" width="5.2" height="1.3" fill="#e6f2fc"/><rect x="3.4" y="4.3" width="2.4" height="1.6" fill="#9dcdf0"/></svg>
<div class="t" style="left:411px;top:555.90px;font-size:8px;height:8px;line-height:8px;color:#5089f2;font-weight:400;-webkit-text-stroke-width:0.05px">阿司匹林肠溶片（含不同产线）</div>
<div class="t" style="left:562.2px;top:555.90px;font-size:8px;height:8px;line-height:8px;color:#333;font-weight:400;-webkit-text-stroke-width:0.1px">阿司匹林肠溶片</div>
<div class="abs" style="left:643.6px;top:553.2px;width:28px;height:11.6px;background:#3bb27a;border-radius:2px"></div>
<div class="t" style="left:643.6px;width:28.00px;text-align:center;top:556.10px;font-size:7px;height:7px;line-height:7px;color:#f4fff8;font-weight:400;-webkit-text-stroke-width:0">已生效</div>
<svg class="abs" style="left:701.8px;top:553.8px;" width="11.4" height="11.4" viewBox="0 0 11.4 11.4"><defs><clipPath id="av544"><circle cx="5.7" cy="5.7" r="5.7"/></clipPath></defs><g clip-path="url(#av544)"><rect width="11.4" height="11.4" fill="#7e4632"/><ellipse cx="2.85" cy="3.42" rx="3.42" ry="2.508" fill="#1c2230"/><ellipse cx="5.13" cy="0.912" rx="3.9899999999999998" ry="1.3679999999999999" fill="#3a6a3a"/><ellipse cx="6.2700000000000005" cy="6.612" rx="2.85" ry="3.42" fill="#b95a42"/><ellipse cx="10.032" cy="5.13" rx="1.5960000000000003" ry="2.85" fill="#1e2440"/><ellipse cx="3.42" cy="9.120000000000001" rx="2.85" ry="2.2800000000000002" fill="#9a5a3c"/></g></svg>
<div class="t" style="left:715.9px;top:555.90px;font-size:8px;height:8px;line-height:8px;color:#333;font-weight:400;-webkit-text-stroke-width:0.1px">系统管理员</div>
<div class="t" style="left:811.3px;top:555.50px;font-size:8.8px;height:8.8px;line-height:8.8px;color:#2a2a2a;font-weight:400;-webkit-text-stroke-width:0.12px;transform:scaleX(0.905);transform-origin:0 50%">2025-11-18 10:34:19</div>
<div class="t" style="left:919.3px;top:555.50px;font-size:8.8px;height:8.8px;line-height:8.8px;color:#2a2a2a;font-weight:400;-webkit-text-stroke-width:0.12px;transform:scaleX(0.905);transform-origin:0 50%">2025-11-18 11:52:03</div>
<svg class="abs" style="left:1027.5px;top:553.8px;" width="11.4" height="11.4" viewBox="0 0 11.4 11.4"><defs><clipPath id="av548"><circle cx="5.7" cy="5.7" r="5.7"/></clipPath></defs><g clip-path="url(#av548)"><rect width="11.4" height="11.4" fill="#7e4632"/><ellipse cx="2.85" cy="3.42" rx="3.42" ry="2.508" fill="#1c2230"/><ellipse cx="5.13" cy="0.912" rx="3.9899999999999998" ry="1.3679999999999999" fill="#3a6a3a"/><ellipse cx="6.2700000000000005" cy="6.612" rx="2.85" ry="3.42" fill="#b95a42"/><ellipse cx="10.032" cy="5.13" rx="1.5960000000000003" ry="2.85" fill="#1e2440"/><ellipse cx="3.42" cy="9.120000000000001" rx="2.85" ry="2.2800000000000002" fill="#9a5a3c"/></g></svg>
<div class="t" style="left:1041.5px;top:555.90px;font-size:8px;height:8px;line-height:8px;color:#333;font-weight:400;-webkit-text-stroke-width:0.1px">系统管理员</div>
<div class="t" style="left:1137.3px;top:555.90px;font-size:8px;height:8px;line-height:8px;color:#4f86ee;font-weight:400;-webkit-text-stroke-width:0.1px">复制</div>
<div class="t" style="left:1155.8999999999999px;top:555.90px;font-size:8px;height:8px;line-height:8px;color:#e5484d;font-weight:400;-webkit-text-stroke-width:0.1px">失效</div>
<div class="t" style="left:1174.4999999999998px;top:555.90px;font-size:8px;height:8px;line-height:8px;color:#e5484d;font-weight:400;-webkit-text-stroke-width:0.1px">变更</div>
<div class="abs" style="left:394.3px;top:570.1999999999999px;width:839.7px;height:20.4px;background:#fafafa"></div>
<div class="abs" style="left:394.3px;top:569.1999999999999px;width:839.7px;height:1px;background:#eef0f4"></div>
<svg class="abs" style="left:399.7px;top:576.0px;" width="9.2" height="9.3" viewBox="0 0 9.2 9.3"><rect x="0" y="0" width="9.2" height="9.3" rx="1.4" fill="#3a9ae0"/><rect x="2" y="2" width="5.2" height="5.3" rx="0.9" fill="none" stroke="#cfe6f8" stroke-width="0.9"/><rect x="2" y="2" width="5.2" height="1.3" fill="#e6f2fc"/><rect x="3.4" y="4.3" width="2.4" height="1.6" fill="#9dcdf0"/></svg>
<div class="t" style="left:411px;top:577.30px;font-size:8px;height:8px;line-height:8px;color:#5089f2;font-weight:400;-webkit-text-stroke-width:0.05px">阿司匹林肠溶片</div>
<div class="t" style="left:562.2px;top:577.30px;font-size:8px;height:8px;line-height:8px;color:#333;font-weight:400;-webkit-text-stroke-width:0.1px">阿司匹林肠溶片</div>
<div class="abs" style="left:643.6px;top:574.6px;width:28px;height:11.6px;background:#e96a67;border-radius:2px"></div>
<div class="t" style="left:643.6px;width:28.00px;text-align:center;top:577.50px;font-size:7px;height:7px;line-height:7px;color:#fff6f6;font-weight:400;-webkit-text-stroke-width:0">变更中</div>
<svg class="abs" style="left:701.8px;top:575.1999999999999px;" width="11.4" height="11.4" viewBox="0 0 11.4 11.4"><defs><clipPath id="av560"><circle cx="5.7" cy="5.7" r="5.7"/></clipPath></defs><g clip-path="url(#av560)"><rect width="11.4" height="11.4" fill="#7e4632"/><ellipse cx="2.85" cy="3.42" rx="3.42" ry="2.508" fill="#1c2230"/><ellipse cx="5.13" cy="0.912" rx="3.9899999999999998" ry="1.3679999999999999" fill="#3a6a3a"/><ellipse cx="6.2700000000000005" cy="6.612" rx="2.85" ry="3.42" fill="#b95a42"/><ellipse cx="10.032" cy="5.13" rx="1.5960000000000003" ry="2.85" fill="#1e2440"/><ellipse cx="3.42" cy="9.120000000000001" rx="2.85" ry="2.2800000000000002" fill="#9a5a3c"/></g></svg>
<div class="t" style="left:715.9px;top:577.30px;font-size:8px;height:8px;line-height:8px;color:#333;font-weight:400;-webkit-text-stroke-width:0.1px">系统管理员</div>
<div class="t" style="left:811.3px;top:576.90px;font-size:8.8px;height:8.8px;line-height:8.8px;color:#2a2a2a;font-weight:400;-webkit-text-stroke-width:0.12px;transform:scaleX(0.905);transform-origin:0 50%">2025-11-14 13:14:13</div>
<div class="t" style="left:919.3px;top:576.90px;font-size:8.8px;height:8.8px;line-height:8.8px;color:#2a2a2a;font-weight:400;-webkit-text-stroke-width:0.12px;transform:scaleX(0.905);transform-origin:0 50%">2025-11-24 13:37:30</div>
<svg class="abs" style="left:1027.5px;top:575.1999999999999px;" width="11.4" height="11.4" viewBox="0 0 11.4 11.4"><defs><clipPath id="av564"><circle cx="5.7" cy="5.7" r="5.7"/></clipPath></defs><g clip-path="url(#av564)"><rect width="11.4" height="11.4" fill="#7e4632"/><ellipse cx="2.85" cy="3.42" rx="3.42" ry="2.508" fill="#1c2230"/><ellipse cx="5.13" cy="0.912" rx="3.9899999999999998" ry="1.3679999999999999" fill="#3a6a3a"/><ellipse cx="6.2700000000000005" cy="6.612" rx="2.85" ry="3.42" fill="#b95a42"/><ellipse cx="10.032" cy="5.13" rx="1.5960000000000003" ry="2.85" fill="#1e2440"/><ellipse cx="3.42" cy="9.120000000000001" rx="2.85" ry="2.2800000000000002" fill="#9a5a3c"/></g></svg>
<div class="t" style="left:1041.5px;top:577.30px;font-size:8px;height:8px;line-height:8px;color:#333;font-weight:400;-webkit-text-stroke-width:0.1px">系统管理员</div>
<div class="t" style="left:1137.3px;top:577.30px;font-size:8px;height:8px;line-height:8px;color:#4f86ee;font-weight:400;-webkit-text-stroke-width:0.1px">编辑</div>
<div class="t" style="left:1155.8999999999999px;top:577.30px;font-size:8px;height:8px;line-height:8px;color:#4f86ee;font-weight:400;-webkit-text-stroke-width:0.1px">复制</div>
<div class="t" style="left:1174.4999999999998px;top:577.30px;font-size:8px;height:8px;line-height:8px;color:#26a269;font-weight:400;-webkit-text-stroke-width:0.1px">生效</div>
<div class="abs" style="left:555.0px;top:142.4px;width:1px;height:449.20000000000005px;background:#eef0f4"></div>
<div class="abs" style="left:637.0px;top:142.4px;width:1px;height:449.20000000000005px;background:#eef0f4"></div>
<div class="abs" style="left:695.8px;top:142.4px;width:1px;height:449.20000000000005px;background:#eef0f4"></div>
<div class="abs" style="left:804.2px;top:142.4px;width:1px;height:449.20000000000005px;background:#eef0f4"></div>
<div class="abs" style="left:913.0px;top:142.4px;width:1px;height:449.20000000000005px;background:#eef0f4"></div>
<div class="abs" style="left:1022.0px;top:142.4px;width:1px;height:449.20000000000005px;background:#eef0f4"></div>
<div class="abs" style="left:1130.2px;top:142.4px;width:1px;height:449.20000000000005px;background:#eef0f4"></div>
<div class="t" style="left:1014.8px;top:603.30px;font-size:7px;height:7px;line-height:7px;color:#777;font-weight:400;-webkit-text-stroke-width:0">共 20 条</div>
<div class="abs" style="left:1048.3px;top:599.5px;width:57.5px;height:13.4px;background:#fff;border:1px solid #dcdfe6;border-radius:2px"></div>
<div class="t" style="left:1057px;top:603.40px;font-size:7px;height:7px;line-height:7px;color:#333;font-weight:400;">300条/页</div>
<svg class="abs" style="left:1096.5px;top:604.5px;" width="6" height="4" viewBox="0 0 6 4"><path d="M0.5 0.5 L3 3 L5.5 0.5" fill="none" stroke="#c0c4cc" stroke-width="0.7"/></svg>
<div class="abs" style="left:1116.3px;top:599px;width:12.8px;height:14px;background:#f4f4f5;border-radius:2px"></div>
<svg class="abs" style="left:1120.5px;top:603.5px;" width="4" height="6" viewBox="0 0 4 6"><path d="M3.2 0.5 L0.8 3 L3.2 5.5" fill="none" stroke="#c0c4cc" stroke-width="0.7"/></svg>
<div class="abs" style="left:1133.2px;top:599px;width:14.8px;height:14px;background:#437bf0;border-radius:2px"></div>
<div class="t" style="left:1133.2px;width:14.80px;text-align:center;top:602.80px;font-size:7px;height:7px;line-height:7px;color:#fff;font-weight:400;">1</div>
<div class="abs" style="left:1151.9px;top:599px;width:12.4px;height:14px;background:#f4f4f5;border-radius:2px"></div>
<svg class="abs" style="left:1156.2px;top:603.5px;" width="4" height="6" viewBox="0 0 4 6"><path d="M0.8 0.5 L3.2 3 L0.8 5.5" fill="none" stroke="#c0c4cc" stroke-width="0.7"/></svg>
<div class="t" style="left:1180px;top:603.30px;font-size:7px;height:7px;line-height:7px;color:#666;font-weight:400;-webkit-text-stroke-width:0.1px">前往</div>
<div class="abs" style="left:1196.2px;top:599.4px;width:26.4px;height:13.6px;background:#fff;border:1px solid #dcdfe6;border-radius:2px"></div>
<div class="t" style="left:1196.2px;width:26.40px;text-align:center;top:603.50px;font-size:7px;height:7px;line-height:7px;color:#333;font-weight:400;">1</div>
<div class="t" style="left:1225.2px;top:603.30px;font-size:7px;height:7px;line-height:7px;color:#666;font-weight:400;-webkit-text-stroke-width:0.1px">页</div>
</div></body></html>
